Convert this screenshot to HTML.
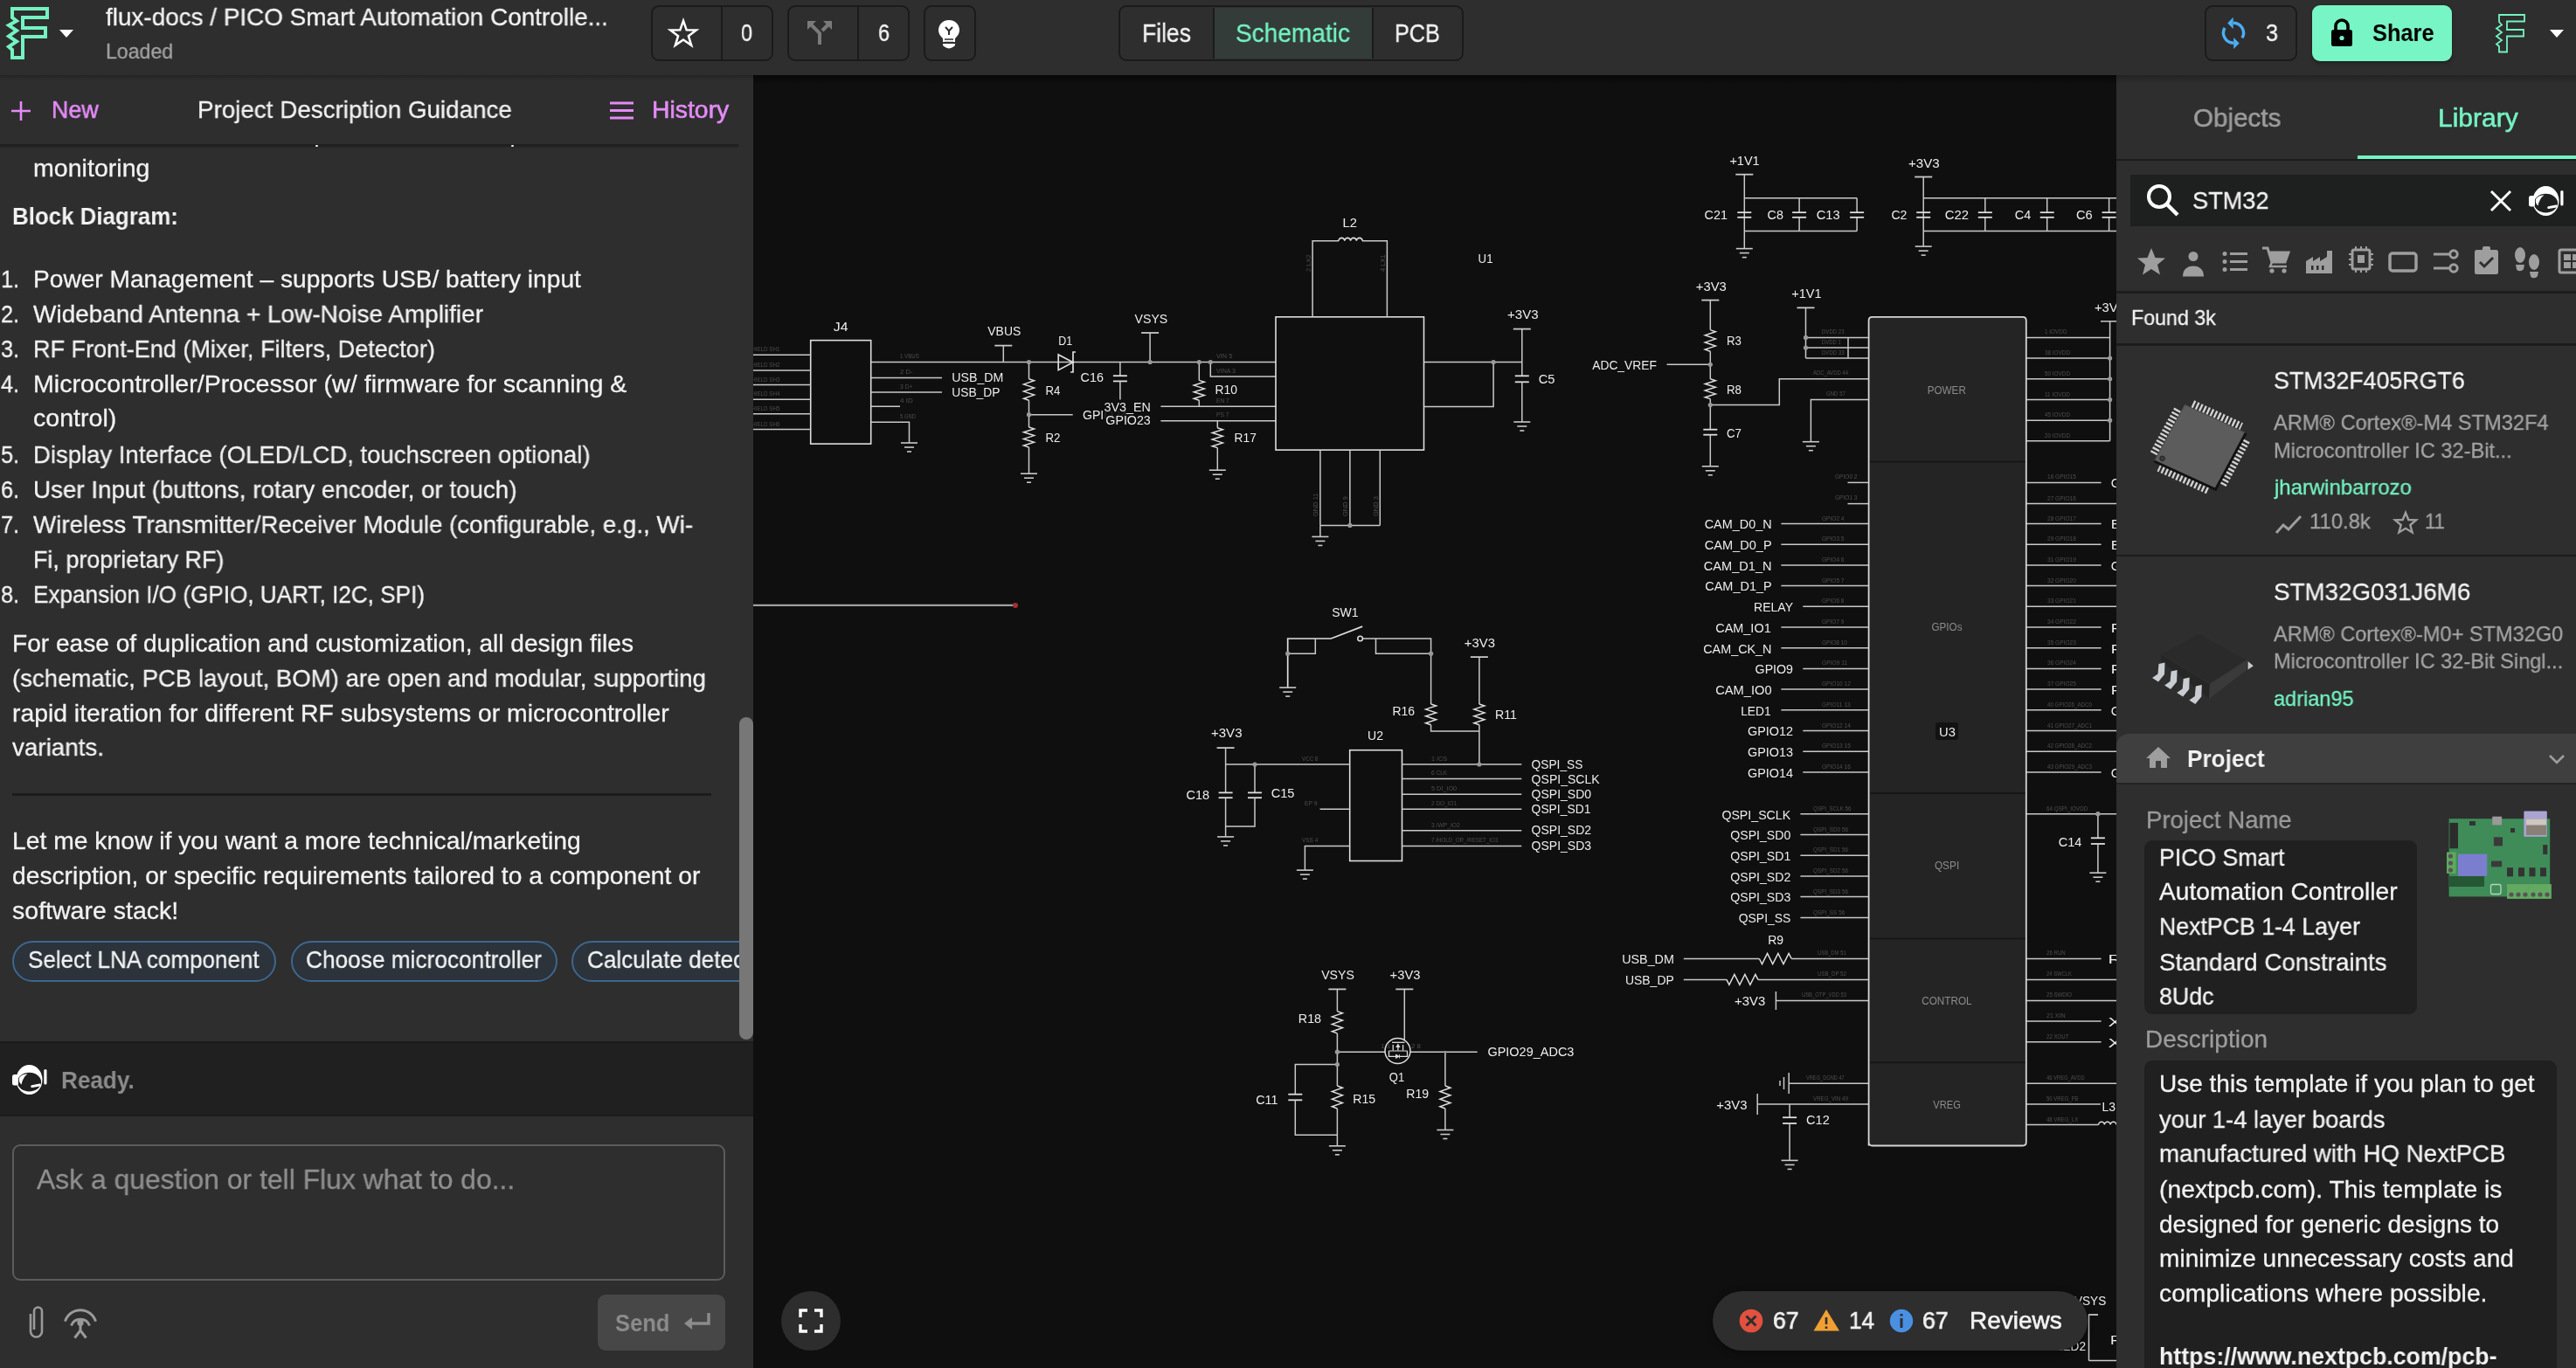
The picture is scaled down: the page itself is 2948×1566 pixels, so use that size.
<!DOCTYPE html><html><head><meta charset="utf-8"><title>Flux</title><style>
html,body{margin:0;padding:0;width:2948px;height:1566px;overflow:hidden;background:#0f0f0f;}
body{position:relative;font-family:"Liberation Sans",sans-serif;}
.b{position:absolute;}
.t{position:absolute;white-space:pre;line-height:1;transform-origin:0 0;will-change:transform;}
svg.b{overflow:visible;}
</style></head><body><div class="b" style="left:862px;top:86px;width:1560px;height:1480px;background:#0f0f0f;overflow:hidden;">
<svg class="b" style="left:-862px;top:-86px;will-change:transform" width="2948" height="1566" viewBox="0 0 2948 1566" font-family="Liberation Sans, sans-serif"><rect x="927.7" y="389.6" width="69.0" height="118.5" rx="0" stroke="#dedede" stroke-width="1.6" fill="none"/><path d="M862.0 406.3 L928.0 406.3" stroke="#c9c9c9" stroke-width="1.5" fill="none"/><path d="M862.0 424.0 L928.0 424.0" stroke="#c9c9c9" stroke-width="1.5" fill="none"/><path d="M862.0 440.6 L928.0 440.6" stroke="#c9c9c9" stroke-width="1.5" fill="none"/><path d="M862.0 457.2 L928.0 457.2" stroke="#c9c9c9" stroke-width="1.5" fill="none"/><path d="M862.0 473.8 L928.0 473.8" stroke="#c9c9c9" stroke-width="1.5" fill="none"/><path d="M862.0 491.6 L928.0 491.6" stroke="#c9c9c9" stroke-width="1.5" fill="none"/><path d="M997.0 414.5 L1460.0 414.5" stroke="#c9c9c9" stroke-width="1.5" fill="none"/><path d="M997.0 432.5 L1078.0 432.5" stroke="#c9c9c9" stroke-width="1.5" fill="none"/><path d="M997.0 448.9 L1078.0 448.9" stroke="#c9c9c9" stroke-width="1.5" fill="none"/><path d="M997.0 465.2 L1030.0 465.2" stroke="#c9c9c9" stroke-width="1.5" fill="none"/><path d="M997.0 483.3 L1040.5 483.3 L1040.5 507.0" stroke="#c9c9c9" stroke-width="1.5" fill="none"/><path d="M1031.0 507.0 L1050.0 507.0" stroke="#c9c9c9" stroke-width="1.6" fill="none"/><path d="M1035.0 512.0 L1046.0 512.0" stroke="#c9c9c9" stroke-width="1.6" fill="none"/><path d="M1038.0 517.0 L1043.0 517.0" stroke="#c9c9c9" stroke-width="1.6" fill="none"/><path d="M1148.3 395.6 L1148.3 414.5" stroke="#c9c9c9" stroke-width="1.5" fill="none"/><path d="M1138.3 395.6 L1158.3 395.6" stroke="#c9c9c9" stroke-width="1.8" fill="none"/><path d="M1177.5 414.5 L1177.5 433.7" stroke="#c9c9c9" stroke-width="1.5" fill="none"/><path d="M1177.5 433.7 L1183.5 435.8 L1171.5 439.9 L1183.5 443.9 L1171.5 448.1 L1183.5 452.1 L1171.5 456.2 L1177.5 458.3" stroke="#dedede" stroke-width="1.5" fill="none"/><path d="M1177.5 458.3 L1177.5 489.0" stroke="#c9c9c9" stroke-width="1.5" fill="none"/><path d="M1177.5 474.7 L1227.7 474.7" stroke="#c9c9c9" stroke-width="1.5" fill="none"/><path d="M1177.5 489.0 L1183.5 490.9 L1171.5 494.8 L1183.5 498.6 L1171.5 502.4 L1183.5 506.2 L1171.5 510.1 L1177.5 512.0" stroke="#dedede" stroke-width="1.5" fill="none"/><path d="M1177.5 512.0 L1177.5 542.2" stroke="#c9c9c9" stroke-width="1.5" fill="none"/><path d="M1168.0 542.2 L1187.0 542.2" stroke="#c9c9c9" stroke-width="1.6" fill="none"/><path d="M1172.0 547.2 L1183.0 547.2" stroke="#c9c9c9" stroke-width="1.6" fill="none"/><path d="M1175.0 552.2 L1180.0 552.2" stroke="#c9c9c9" stroke-width="1.6" fill="none"/><path d="M1211.2 406 L1211.2 423.7 L1228 414.8 Z" stroke="#dedede" stroke-width="1.7" fill="none"/><path d="M1231.0 403.0 L1228.0 403.0 L1228.0 426.0 L1225.0 426.0" stroke="#dedede" stroke-width="1.7" fill="none"/><path d="M1281.9 414.5 L1281.9 430.2" stroke="#c9c9c9" stroke-width="1.5" fill="none"/><path d="M1273.9 430.2 L1289.9 430.2" stroke="#dedede" stroke-width="1.8" fill="none"/><path d="M1273.9 436.4 L1289.9 436.4" stroke="#dedede" stroke-width="1.8" fill="none"/><path d="M1281.9 436.4 L1281.9 457.5" stroke="#c9c9c9" stroke-width="1.5" fill="none"/><path d="M1328.4 465.3 L1460.0 465.3" stroke="#c9c9c9" stroke-width="1.5" fill="none"/><path d="M1328.4 481.8 L1460.0 481.8" stroke="#c9c9c9" stroke-width="1.5" fill="none"/><path d="M1316.1 381.0 L1316.1 414.5" stroke="#c9c9c9" stroke-width="1.5" fill="none"/><path d="M1306.1 381.0 L1326.1 381.0" stroke="#c9c9c9" stroke-width="1.8" fill="none"/><path d="M1372.3 414.5 L1372.3 435.4" stroke="#c9c9c9" stroke-width="1.5" fill="none"/><path d="M1372.3 435.4 L1378.3 437.3 L1366.3 441.1 L1378.3 444.9 L1366.3 448.7 L1378.3 452.5 L1366.3 456.3 L1372.3 458.2" stroke="#dedede" stroke-width="1.5" fill="none"/><path d="M1372.3 458.2 L1372.3 465.3" stroke="#c9c9c9" stroke-width="1.5" fill="none"/><path d="M1385.3 414.5 L1385.3 430.9 L1460.0 430.9" stroke="#c9c9c9" stroke-width="1.5" fill="none"/><path d="M1393.3 481.8 L1393.3 489.8" stroke="#c9c9c9" stroke-width="1.5" fill="none"/><path d="M1393.3 489.8 L1399.3 491.7 L1387.3 495.5 L1399.3 499.3 L1387.3 503.1 L1399.3 506.9 L1387.3 510.7 L1393.3 512.6" stroke="#dedede" stroke-width="1.5" fill="none"/><path d="M1393.3 512.6 L1393.3 538.2" stroke="#c9c9c9" stroke-width="1.5" fill="none"/><path d="M1383.8 538.2 L1402.8 538.2" stroke="#c9c9c9" stroke-width="1.6" fill="none"/><path d="M1387.8 543.2 L1398.8 543.2" stroke="#c9c9c9" stroke-width="1.6" fill="none"/><path d="M1390.8 548.2 L1395.8 548.2" stroke="#c9c9c9" stroke-width="1.6" fill="none"/><rect x="1460.0" y="362.8" width="169.5" height="152.3" rx="0" stroke="#dedede" stroke-width="1.6" fill="none"/><path d="M1502.1 362.8 L1502.1 275.8 L1532.0 275.8" stroke="#c9c9c9" stroke-width="1.5" fill="none"/><path d="M1559.0 275.8 L1587.4 275.8 L1587.4 362.8" stroke="#c9c9c9" stroke-width="1.5" fill="none"/><path d="M1532 275.8 a3.4 3.4 0 0 1 6.8 0 a3.4 3.4 0 0 1 6.8 0 a3.4 3.4 0 0 1 6.8 0 a3.4 3.4 0 0 1 6.8 0" stroke="#dedede" stroke-width="1.6" fill="none"/><path d="M1510.9 515.1 L1510.9 601.4" stroke="#c9c9c9" stroke-width="1.5" fill="none"/><path d="M1544.9 515.1 L1544.9 601.4" stroke="#c9c9c9" stroke-width="1.5" fill="none"/><path d="M1579.3 515.1 L1579.3 601.4" stroke="#c9c9c9" stroke-width="1.5" fill="none"/><path d="M1510.9 601.4 L1579.3 601.4" stroke="#c9c9c9" stroke-width="1.5" fill="none"/><path d="M1510.9 601.4 L1510.9 614.4" stroke="#c9c9c9" stroke-width="1.5" fill="none"/><path d="M1501.4 614.4 L1520.4 614.4" stroke="#c9c9c9" stroke-width="1.6" fill="none"/><path d="M1505.4 619.4 L1516.4 619.4" stroke="#c9c9c9" stroke-width="1.6" fill="none"/><path d="M1508.4 624.4 L1513.4 624.4" stroke="#c9c9c9" stroke-width="1.6" fill="none"/><path d="M1629.5 414.5 L1741.8 414.5" stroke="#c9c9c9" stroke-width="1.5" fill="none"/><path d="M1709.1 414.5 L1709.1 465.4 L1629.5 465.4" stroke="#c9c9c9" stroke-width="1.5" fill="none"/><path d="M1741.8 376.6 L1741.8 430.3" stroke="#c9c9c9" stroke-width="1.5" fill="none"/><path d="M1733.8 430.3 L1749.8 430.3" stroke="#dedede" stroke-width="1.8" fill="none"/><path d="M1733.8 437.3 L1749.8 437.3" stroke="#dedede" stroke-width="1.8" fill="none"/><path d="M1741.8 437.3 L1741.8 483.0" stroke="#c9c9c9" stroke-width="1.5" fill="none"/><path d="M1731.8 376.6 L1751.8 376.6" stroke="#c9c9c9" stroke-width="1.8" fill="none"/><path d="M1732.3 483.0 L1751.3 483.0" stroke="#c9c9c9" stroke-width="1.6" fill="none"/><path d="M1736.3 488.0 L1747.3 488.0" stroke="#c9c9c9" stroke-width="1.6" fill="none"/><path d="M1739.3 493.0 L1744.3 493.0" stroke="#c9c9c9" stroke-width="1.6" fill="none"/><path d="M1907.5 417.3 L1957.3 417.3" stroke="#c9c9c9" stroke-width="1.5" fill="none"/><path d="M1957.3 343.6 L1957.3 377.6" stroke="#c9c9c9" stroke-width="1.5" fill="none"/><path d="M1947.3 343.6 L1967.3 343.6" stroke="#c9c9c9" stroke-width="1.8" fill="none"/><path d="M1957.3 377.6 L1963.3 379.7 L1951.3 383.8 L1963.3 387.9 L1951.3 391.9 L1963.3 396.1 L1951.3 400.1 L1957.3 402.2" stroke="#dedede" stroke-width="1.5" fill="none"/><path d="M1957.3 402.2 L1957.3 433.8" stroke="#c9c9c9" stroke-width="1.5" fill="none"/><path d="M1957.3 433.8 L1963.3 435.7 L1951.3 439.5 L1963.3 443.3 L1951.3 447.1 L1963.3 450.9 L1951.3 454.7 L1957.3 456.6" stroke="#dedede" stroke-width="1.5" fill="none"/><path d="M1957.3 456.6 L1957.3 491.7" stroke="#c9c9c9" stroke-width="1.5" fill="none"/><path d="M1949.3 491.7 L1965.3 491.7" stroke="#dedede" stroke-width="1.8" fill="none"/><path d="M1949.3 497.7 L1965.3 497.7" stroke="#dedede" stroke-width="1.8" fill="none"/><path d="M1957.3 497.7 L1957.3 533.8" stroke="#c9c9c9" stroke-width="1.5" fill="none"/><path d="M1947.8 533.8 L1966.8 533.8" stroke="#c9c9c9" stroke-width="1.6" fill="none"/><path d="M1951.8 538.8 L1962.8 538.8" stroke="#c9c9c9" stroke-width="1.6" fill="none"/><path d="M1954.8 543.8 L1959.8 543.8" stroke="#c9c9c9" stroke-width="1.6" fill="none"/><path d="M1957.3 463.6 L2036.3 463.6 L2036.3 433.8 L2138.4 433.8" stroke="#c9c9c9" stroke-width="1.5" fill="none"/><path d="M2066.5 352.3 L2066.5 410.0" stroke="#c9c9c9" stroke-width="1.5" fill="none"/><path d="M2056.5 352.3 L2076.5 352.3" stroke="#c9c9c9" stroke-width="1.8" fill="none"/><path d="M2066.5 386.4 L2138.4 386.4" stroke="#c9c9c9" stroke-width="1.5" fill="none"/><path d="M2066.5 398.0 L2138.4 398.0" stroke="#c9c9c9" stroke-width="1.5" fill="none"/><path d="M2066.5 410.0 L2138.4 410.0" stroke="#c9c9c9" stroke-width="1.5" fill="none"/><path d="M2115.0 386.4 L2115.0 410.0" stroke="#c9c9c9" stroke-width="1.5" fill="none"/><path d="M2138.4 457.6 L2072.4 457.6 L2072.4 505.7" stroke="#c9c9c9" stroke-width="1.5" fill="none"/><path d="M2062.9 505.7 L2081.9 505.7" stroke="#c9c9c9" stroke-width="1.6" fill="none"/><path d="M2066.9 510.7 L2077.9 510.7" stroke="#c9c9c9" stroke-width="1.6" fill="none"/><path d="M2069.9 515.7 L2074.9 515.7" stroke="#c9c9c9" stroke-width="1.6" fill="none"/><path d="M1996.3 199.7 L1996.3 284.6" stroke="#c9c9c9" stroke-width="1.5" fill="none"/><path d="M1986.3 199.7 L2006.3 199.7" stroke="#c9c9c9" stroke-width="1.8" fill="none"/><path d="M1986.8 284.6 L2005.8 284.6" stroke="#c9c9c9" stroke-width="1.6" fill="none"/><path d="M1990.8 289.6 L2001.8 289.6" stroke="#c9c9c9" stroke-width="1.6" fill="none"/><path d="M1993.8 294.6 L1998.8 294.6" stroke="#c9c9c9" stroke-width="1.6" fill="none"/><path d="M1996.3 226.7 L2125.1 226.7" stroke="#c9c9c9" stroke-width="1.5" fill="none"/><path d="M1996.3 264.6 L2125.1 264.6" stroke="#c9c9c9" stroke-width="1.5" fill="none"/><path d="M1988.3 243.2 L2004.3 243.2" stroke="#dedede" stroke-width="1.8" fill="none"/><path d="M1988.3 248.8 L2004.3 248.8" stroke="#dedede" stroke-width="1.8" fill="none"/><path d="M2059.1 226.7 L2059.1 243.2" stroke="#c9c9c9" stroke-width="1.5" fill="none"/><path d="M2059.1 248.8 L2059.1 264.6" stroke="#c9c9c9" stroke-width="1.5" fill="none"/><path d="M2051.1 243.2 L2067.1 243.2" stroke="#dedede" stroke-width="1.8" fill="none"/><path d="M2051.1 248.8 L2067.1 248.8" stroke="#dedede" stroke-width="1.8" fill="none"/><path d="M2125.1 226.7 L2125.1 243.2" stroke="#c9c9c9" stroke-width="1.5" fill="none"/><path d="M2125.1 248.8 L2125.1 264.6" stroke="#c9c9c9" stroke-width="1.5" fill="none"/><path d="M2117.1 243.2 L2133.1 243.2" stroke="#dedede" stroke-width="1.8" fill="none"/><path d="M2117.1 248.8 L2133.1 248.8" stroke="#dedede" stroke-width="1.8" fill="none"/><path d="M2201.2 202.5 L2201.2 282.1" stroke="#c9c9c9" stroke-width="1.5" fill="none"/><path d="M2191.2 202.5 L2211.2 202.5" stroke="#c9c9c9" stroke-width="1.8" fill="none"/><path d="M2191.7 282.1 L2210.7 282.1" stroke="#c9c9c9" stroke-width="1.6" fill="none"/><path d="M2195.7 287.1 L2206.7 287.1" stroke="#c9c9c9" stroke-width="1.6" fill="none"/><path d="M2198.7 292.1 L2203.7 292.1" stroke="#c9c9c9" stroke-width="1.6" fill="none"/><path d="M2201.2 226.7 L2430.0 226.7" stroke="#c9c9c9" stroke-width="1.5" fill="none"/><path d="M2201.2 264.6 L2430.0 264.6" stroke="#c9c9c9" stroke-width="1.5" fill="none"/><path d="M2193.2 243.2 L2209.2 243.2" stroke="#dedede" stroke-width="1.8" fill="none"/><path d="M2193.2 248.8 L2209.2 248.8" stroke="#dedede" stroke-width="1.8" fill="none"/><path d="M2271.8 226.7 L2271.8 243.2" stroke="#c9c9c9" stroke-width="1.5" fill="none"/><path d="M2271.8 248.8 L2271.8 264.6" stroke="#c9c9c9" stroke-width="1.5" fill="none"/><path d="M2263.8 243.2 L2279.8 243.2" stroke="#dedede" stroke-width="1.8" fill="none"/><path d="M2263.8 248.8 L2279.8 248.8" stroke="#dedede" stroke-width="1.8" fill="none"/><path d="M2342.7 226.7 L2342.7 243.2" stroke="#c9c9c9" stroke-width="1.5" fill="none"/><path d="M2342.7 248.8 L2342.7 264.6" stroke="#c9c9c9" stroke-width="1.5" fill="none"/><path d="M2334.7 243.2 L2350.7 243.2" stroke="#dedede" stroke-width="1.8" fill="none"/><path d="M2334.7 248.8 L2350.7 248.8" stroke="#dedede" stroke-width="1.8" fill="none"/><path d="M2413.6 226.7 L2413.6 243.2" stroke="#c9c9c9" stroke-width="1.5" fill="none"/><path d="M2413.6 248.8 L2413.6 264.6" stroke="#c9c9c9" stroke-width="1.5" fill="none"/><path d="M2405.6 243.2 L2421.6 243.2" stroke="#dedede" stroke-width="1.8" fill="none"/><path d="M2405.6 248.8 L2421.6 248.8" stroke="#dedede" stroke-width="1.8" fill="none"/><path d="M2318.8 386.4 L2414.6 386.4" stroke="#c9c9c9" stroke-width="1.5" fill="none"/><path d="M2318.8 410.0 L2414.6 410.0" stroke="#c9c9c9" stroke-width="1.5" fill="none"/><path d="M2318.8 433.8 L2414.6 433.8" stroke="#c9c9c9" stroke-width="1.5" fill="none"/><path d="M2318.8 457.6 L2414.6 457.6" stroke="#c9c9c9" stroke-width="1.5" fill="none"/><path d="M2318.8 481.2 L2414.6 481.2" stroke="#c9c9c9" stroke-width="1.5" fill="none"/><path d="M2318.8 504.7 L2414.6 504.7" stroke="#c9c9c9" stroke-width="1.5" fill="none"/><path d="M2414.6 367.8 L2414.6 504.7" stroke="#c9c9c9" stroke-width="1.5" fill="none"/><path d="M2404.0 367.8 L2430.0 367.8" stroke="#c9c9c9" stroke-width="1.5" fill="none"/><path d="M2114.5 552.4 L2138.0 552.4" stroke="#c9c9c9" stroke-width="1.5" fill="none"/><path d="M2114.5 576.6 L2138.0 576.6" stroke="#c9c9c9" stroke-width="1.5" fill="none"/><path d="M2038.4 599.5 L2138.0 599.5" stroke="#c9c9c9" stroke-width="1.5" fill="none"/><path d="M2038.4 623.2 L2138.0 623.2" stroke="#c9c9c9" stroke-width="1.5" fill="none"/><path d="M2038.4 646.9 L2138.0 646.9" stroke="#c9c9c9" stroke-width="1.5" fill="none"/><path d="M2038.4 670.6 L2138.0 670.6" stroke="#c9c9c9" stroke-width="1.5" fill="none"/><path d="M2063.3 694.3 L2138.0 694.3" stroke="#c9c9c9" stroke-width="1.5" fill="none"/><path d="M2038.4 718.0 L2138.0 718.0" stroke="#c9c9c9" stroke-width="1.5" fill="none"/><path d="M2038.4 741.7 L2138.0 741.7" stroke="#c9c9c9" stroke-width="1.5" fill="none"/><path d="M2063.3 765.4 L2138.0 765.4" stroke="#c9c9c9" stroke-width="1.5" fill="none"/><path d="M2038.4 789.1 L2138.0 789.1" stroke="#c9c9c9" stroke-width="1.5" fill="none"/><path d="M2038.4 812.8 L2138.0 812.8" stroke="#c9c9c9" stroke-width="1.5" fill="none"/><path d="M2063.3 836.5 L2138.0 836.5" stroke="#c9c9c9" stroke-width="1.5" fill="none"/><path d="M2063.3 860.2 L2138.0 860.2" stroke="#c9c9c9" stroke-width="1.5" fill="none"/><path d="M2063.3 883.9 L2138.0 883.9" stroke="#c9c9c9" stroke-width="1.5" fill="none"/><path d="M2318.8 552.4 L2404.6 552.4" stroke="#c9c9c9" stroke-width="1.5" fill="none"/><path d="M2318.8 576.6 L2430.0 576.6" stroke="#c9c9c9" stroke-width="1.5" fill="none"/><path d="M2318.8 599.5 L2404.6 599.5" stroke="#c9c9c9" stroke-width="1.5" fill="none"/><path d="M2318.8 623.2 L2404.6 623.2" stroke="#c9c9c9" stroke-width="1.5" fill="none"/><path d="M2318.8 646.9 L2404.6 646.9" stroke="#c9c9c9" stroke-width="1.5" fill="none"/><path d="M2318.8 670.6 L2430.0 670.6" stroke="#c9c9c9" stroke-width="1.5" fill="none"/><path d="M2318.8 694.3 L2430.0 694.3" stroke="#c9c9c9" stroke-width="1.5" fill="none"/><path d="M2318.8 718.0 L2404.6 718.0" stroke="#c9c9c9" stroke-width="1.5" fill="none"/><path d="M2318.8 741.7 L2404.6 741.7" stroke="#c9c9c9" stroke-width="1.5" fill="none"/><path d="M2318.8 765.4 L2404.6 765.4" stroke="#c9c9c9" stroke-width="1.5" fill="none"/><path d="M2318.8 789.1 L2404.6 789.1" stroke="#c9c9c9" stroke-width="1.5" fill="none"/><path d="M2318.8 812.8 L2404.6 812.8" stroke="#c9c9c9" stroke-width="1.5" fill="none"/><path d="M2318.8 836.5 L2430.0 836.5" stroke="#c9c9c9" stroke-width="1.5" fill="none"/><path d="M2318.8 860.2 L2430.0 860.2" stroke="#c9c9c9" stroke-width="1.5" fill="none"/><path d="M2318.8 883.9 L2404.6 883.9" stroke="#c9c9c9" stroke-width="1.5" fill="none"/><path d="M2060.4 931.7 L2138.7 931.7" stroke="#c9c9c9" stroke-width="1.5" fill="none"/><path d="M2060.4 955.6 L2138.7 955.6" stroke="#c9c9c9" stroke-width="1.5" fill="none"/><path d="M2060.4 979.3 L2138.7 979.3" stroke="#c9c9c9" stroke-width="1.5" fill="none"/><path d="M2060.4 1002.9 L2138.7 1002.9" stroke="#c9c9c9" stroke-width="1.5" fill="none"/><path d="M2060.4 1026.5 L2138.7 1026.5" stroke="#c9c9c9" stroke-width="1.5" fill="none"/><path d="M2060.4 1050.5 L2138.7 1050.5" stroke="#c9c9c9" stroke-width="1.5" fill="none"/><path d="M1926.8 1097.5 L2013.4 1097.5" stroke="#c9c9c9" stroke-width="1.5" fill="none"/><path d="M2013.4 1097.5 L2016.5 1103.5 L2022.6 1091.5 L2028.7 1103.5 L2034.9 1091.5 L2041.0 1103.5 L2047.1 1091.5 L2050.2 1097.5" stroke="#dedede" stroke-width="1.5" fill="none"/><path d="M2050.2 1097.5 L2138.7 1097.5" stroke="#c9c9c9" stroke-width="1.5" fill="none"/><path d="M1926.8 1121.4 L1975.9 1121.4" stroke="#c9c9c9" stroke-width="1.5" fill="none"/><path d="M1975.9 1121.4 L1978.9 1127.4 L1984.9 1115.4 L1990.9 1127.4 L1996.9 1115.4 L2002.9 1127.4 L2008.9 1115.4 L2011.9 1121.4" stroke="#dedede" stroke-width="1.5" fill="none"/><path d="M2011.9 1121.4 L2138.7 1121.4" stroke="#c9c9c9" stroke-width="1.5" fill="none"/><path d="M2032.4 1135.0 L2032.4 1156.0" stroke="#c9c9c9" stroke-width="1.5" fill="none"/><path d="M2032.4 1145.4 L2138.7 1145.4" stroke="#c9c9c9" stroke-width="1.5" fill="none"/><path d="M2047.2 1240.2 L2138.7 1240.2" stroke="#c9c9c9" stroke-width="1.5" fill="none"/><path d="M2047.2 1228.0 L2047.2 1252.0" stroke="#c9c9c9" stroke-width="1.5" fill="none"/><path d="M2041.5 1233.0 L2041.5 1247.0" stroke="#c9c9c9" stroke-width="1.5" fill="none"/><path d="M2037.0 1237.0 L2037.0 1243.0" stroke="#c9c9c9" stroke-width="1.5" fill="none"/><path d="M2011.2 1252.0 L2011.2 1276.0" stroke="#c9c9c9" stroke-width="1.5" fill="none"/><path d="M2011.2 1263.9 L2138.7 1263.9" stroke="#c9c9c9" stroke-width="1.5" fill="none"/><path d="M2048.1 1263.9 L2048.1 1279.2" stroke="#c9c9c9" stroke-width="1.5" fill="none"/><path d="M2040.1 1279.2 L2056.1 1279.2" stroke="#dedede" stroke-width="1.8" fill="none"/><path d="M2040.1 1286.0 L2056.1 1286.0" stroke="#dedede" stroke-width="1.8" fill="none"/><path d="M2048.1 1286.0 L2048.1 1328.4" stroke="#c9c9c9" stroke-width="1.5" fill="none"/><path d="M2038.6 1328.4 L2057.6 1328.4" stroke="#c9c9c9" stroke-width="1.6" fill="none"/><path d="M2042.6 1333.4 L2053.6 1333.4" stroke="#c9c9c9" stroke-width="1.6" fill="none"/><path d="M2045.6 1338.4 L2050.6 1338.4" stroke="#c9c9c9" stroke-width="1.6" fill="none"/><path d="M2318.8 931.7 L2430.0 931.7" stroke="#c9c9c9" stroke-width="1.5" fill="none"/><path d="M2318.8 1097.5 L2404.6 1097.5" stroke="#c9c9c9" stroke-width="1.5" fill="none"/><path d="M2318.8 1121.4 L2430.0 1121.4" stroke="#c9c9c9" stroke-width="1.5" fill="none"/><path d="M2318.8 1145.4 L2430.0 1145.4" stroke="#c9c9c9" stroke-width="1.5" fill="none"/><path d="M2318.8 1169.0 L2404.6 1169.0" stroke="#c9c9c9" stroke-width="1.5" fill="none"/><path d="M2318.8 1192.7 L2404.6 1192.7" stroke="#c9c9c9" stroke-width="1.5" fill="none"/><path d="M2318.8 1240.2 L2430.0 1240.2" stroke="#c9c9c9" stroke-width="1.5" fill="none"/><path d="M2318.8 1263.9 L2403.9 1263.9" stroke="#c9c9c9" stroke-width="1.5" fill="none"/><path d="M2318.8 1287.6 L2401.6 1287.6" stroke="#c9c9c9" stroke-width="1.5" fill="none"/><path d="M2401.6 1287.6 a3.4 3.4 0 0 1 6.8 0 a3.4 3.4 0 0 1 6.8 0 a3.4 3.4 0 0 1 6.8 0" stroke="#dedede" stroke-width="1.5" fill="none"/><path d="M2400.9 931.7 L2400.9 959.3" stroke="#c9c9c9" stroke-width="1.5" fill="none"/><path d="M2392.9 959.3 L2408.9 959.3" stroke="#dedede" stroke-width="1.8" fill="none"/><path d="M2392.9 966.0 L2408.9 966.0" stroke="#dedede" stroke-width="1.8" fill="none"/><path d="M2400.9 966.0 L2400.9 999.2" stroke="#c9c9c9" stroke-width="1.5" fill="none"/><path d="M2391.4 999.2 L2410.4 999.2" stroke="#c9c9c9" stroke-width="1.6" fill="none"/><path d="M2395.4 1004.2 L2406.4 1004.2" stroke="#c9c9c9" stroke-width="1.6" fill="none"/><path d="M2398.4 1009.2 L2403.4 1009.2" stroke="#c9c9c9" stroke-width="1.6" fill="none"/><path d="M1473.7 787.1 L1473.7 731.0 L1505.3 731.0 L1523.2 731.0 L1559.2 717.1" stroke="#dedede" stroke-width="1.7" fill="none"/><path d="M1473.7 748.2 L1505.3 748.2 L1505.3 731.0" stroke="#c9c9c9" stroke-width="1.5" fill="none"/><path d="M1464.2 787.1 L1483.2 787.1" stroke="#c9c9c9" stroke-width="1.6" fill="none"/><path d="M1468.2 792.1 L1479.2 792.1" stroke="#c9c9c9" stroke-width="1.6" fill="none"/><path d="M1471.2 797.1 L1476.2 797.1" stroke="#c9c9c9" stroke-width="1.6" fill="none"/><path d="M1559.4 731.0 L1637.6 731.0 L1637.6 806.0" stroke="#c9c9c9" stroke-width="1.5" fill="none"/><path d="M1574.5 731.0 L1574.5 748.2 L1637.6 748.2" stroke="#c9c9c9" stroke-width="1.5" fill="none"/><path d="M1637.6 806.0 L1643.6 808.0 L1631.6 811.9 L1643.6 815.9 L1631.6 819.8 L1643.6 823.8 L1631.6 827.7 L1637.6 829.7" stroke="#dedede" stroke-width="1.5" fill="none"/><path d="M1637.6 829.7 L1637.6 837.1 L1692.9 837.1" stroke="#c9c9c9" stroke-width="1.5" fill="none"/><path d="M1692.9 752.1 L1692.9 806.0" stroke="#c9c9c9" stroke-width="1.5" fill="none"/><path d="M1682.9 752.1 L1702.9 752.1" stroke="#c9c9c9" stroke-width="1.8" fill="none"/><path d="M1692.9 806.0 L1698.9 808.0 L1686.9 811.9 L1698.9 815.9 L1686.9 819.8 L1698.9 823.8 L1686.9 827.7 L1692.9 829.7" stroke="#dedede" stroke-width="1.5" fill="none"/><path d="M1692.9 829.7 L1692.9 875.0" stroke="#c9c9c9" stroke-width="1.5" fill="none"/><rect x="1544.7" y="858.7" width="59.8" height="126.8" rx="0" stroke="#dedede" stroke-width="1.6" fill="none"/><path d="M1604.5 875.0 L1741.3 875.0" stroke="#c9c9c9" stroke-width="1.5" fill="none"/><path d="M1604.5 891.6 L1741.3 891.6" stroke="#c9c9c9" stroke-width="1.5" fill="none"/><path d="M1604.5 909.2 L1741.3 909.2" stroke="#c9c9c9" stroke-width="1.5" fill="none"/><path d="M1604.5 926.3 L1741.3 926.3" stroke="#c9c9c9" stroke-width="1.5" fill="none"/><path d="M1604.5 950.8 L1741.3 950.8" stroke="#c9c9c9" stroke-width="1.5" fill="none"/><path d="M1604.5 968.4 L1741.3 968.4" stroke="#c9c9c9" stroke-width="1.5" fill="none"/><path d="M1402.6 875.0 L1544.7 875.0" stroke="#c9c9c9" stroke-width="1.5" fill="none"/><path d="M1510.5 926.3 L1544.7 926.3" stroke="#c9c9c9" stroke-width="1.5" fill="none"/><path d="M1544.7 968.4 L1493.4 968.4 L1493.4 996.1" stroke="#c9c9c9" stroke-width="1.5" fill="none"/><path d="M1483.9 996.1 L1502.9 996.1" stroke="#c9c9c9" stroke-width="1.6" fill="none"/><path d="M1487.9 1001.1 L1498.9 1001.1" stroke="#c9c9c9" stroke-width="1.6" fill="none"/><path d="M1490.9 1006.1 L1495.9 1006.1" stroke="#c9c9c9" stroke-width="1.6" fill="none"/><path d="M1402.6 856.1 L1402.6 907.4" stroke="#c9c9c9" stroke-width="1.5" fill="none"/><path d="M1392.6 856.1 L1412.6 856.1" stroke="#c9c9c9" stroke-width="1.8" fill="none"/><path d="M1394.6 907.4 L1410.6 907.4" stroke="#dedede" stroke-width="1.8" fill="none"/><path d="M1394.6 913.2 L1410.6 913.2" stroke="#dedede" stroke-width="1.8" fill="none"/><path d="M1402.6 913.2 L1402.6 957.9" stroke="#c9c9c9" stroke-width="1.5" fill="none"/><path d="M1393.1 957.9 L1412.1 957.9" stroke="#c9c9c9" stroke-width="1.6" fill="none"/><path d="M1397.1 962.9 L1408.1 962.9" stroke="#c9c9c9" stroke-width="1.6" fill="none"/><path d="M1400.1 967.9 L1405.1 967.9" stroke="#c9c9c9" stroke-width="1.6" fill="none"/><path d="M1436.0 875.0 L1436.0 907.4" stroke="#c9c9c9" stroke-width="1.5" fill="none"/><path d="M1428.0 907.4 L1444.0 907.4" stroke="#dedede" stroke-width="1.8" fill="none"/><path d="M1428.0 913.2 L1444.0 913.2" stroke="#dedede" stroke-width="1.8" fill="none"/><path d="M1436.0 913.2 L1436.0 946.1 L1402.6 946.1" stroke="#c9c9c9" stroke-width="1.5" fill="none"/><path d="M1530.4 1132.4 L1530.4 1157.6" stroke="#c9c9c9" stroke-width="1.5" fill="none"/><path d="M1520.4 1132.4 L1540.4 1132.4" stroke="#c9c9c9" stroke-width="1.8" fill="none"/><path d="M1530.4 1157.6 L1536.4 1159.7 L1524.4 1163.9 L1536.4 1168.1 L1524.4 1172.4 L1536.4 1176.6 L1524.4 1180.8 L1530.4 1182.9" stroke="#dedede" stroke-width="1.5" fill="none"/><path d="M1530.4 1182.9 L1530.4 1243.0" stroke="#c9c9c9" stroke-width="1.5" fill="none"/><path d="M1530.4 1204.2 L1585.0 1204.2" stroke="#c9c9c9" stroke-width="1.5" fill="none"/><path d="M1614.0 1204.2 L1690.7 1204.2" stroke="#c9c9c9" stroke-width="1.5" fill="none"/><path d="M1530.4 1218.6 L1482.3 1218.6 L1482.3 1252.7" stroke="#c9c9c9" stroke-width="1.5" fill="none"/><path d="M1474.3 1252.7 L1490.3 1252.7" stroke="#dedede" stroke-width="1.8" fill="none"/><path d="M1474.3 1259.3 L1490.3 1259.3" stroke="#dedede" stroke-width="1.8" fill="none"/><path d="M1482.3 1259.3 L1482.3 1299.3 L1530.4 1299.3" stroke="#c9c9c9" stroke-width="1.5" fill="none"/><path d="M1530.4 1243.0 L1536.4 1245.2 L1524.4 1249.5 L1536.4 1253.8 L1524.4 1258.2 L1536.4 1262.5 L1524.4 1266.8 L1530.4 1269.0" stroke="#dedede" stroke-width="1.5" fill="none"/><path d="M1530.4 1269.0 L1530.4 1311.8" stroke="#c9c9c9" stroke-width="1.5" fill="none"/><path d="M1520.9 1311.8 L1539.9 1311.8" stroke="#c9c9c9" stroke-width="1.6" fill="none"/><path d="M1524.9 1316.8 L1535.9 1316.8" stroke="#c9c9c9" stroke-width="1.6" fill="none"/><path d="M1527.9 1321.8 L1532.9 1321.8" stroke="#c9c9c9" stroke-width="1.6" fill="none"/><path d="M1607.3 1132.4 L1607.3 1190.6" stroke="#c9c9c9" stroke-width="1.5" fill="none"/><path d="M1597.3 1132.4 L1617.3 1132.4" stroke="#c9c9c9" stroke-width="1.8" fill="none"/><path d="M1593.0 1193.3 L1607.5 1193.3" stroke="#dedede" stroke-width="1.3" fill="none"/><path d="M1594.2 1196.0 L1594.2 1202.5" stroke="#dedede" stroke-width="1.3" fill="none"/><path d="M1599.9 1196.0 L1599.9 1202.5" stroke="#dedede" stroke-width="1.3" fill="none"/><path d="M1605.6 1196.0 L1605.6 1202.5" stroke="#dedede" stroke-width="1.3" fill="none"/><path d="M1589.5 1203.0 L1589.5 1209.3 L1610.5 1209.3 L1610.5 1203.0" stroke="#dedede" stroke-width="1.3" fill="none"/><path d="M1589.5 1203.0 L1610.5 1203.0" stroke="#dedede" stroke-width="1.0" fill="none"/><path d="M1653.9 1204.2 L1653.9 1243.0" stroke="#c9c9c9" stroke-width="1.5" fill="none"/><path d="M1653.9 1243.0 L1659.9 1245.2 L1647.9 1249.5 L1659.9 1253.8 L1647.9 1258.2 L1659.9 1262.5 L1647.9 1266.8 L1653.9 1269.0" stroke="#dedede" stroke-width="1.5" fill="none"/><path d="M1653.9 1269.0 L1653.9 1293.5" stroke="#c9c9c9" stroke-width="1.5" fill="none"/><path d="M1644.4 1293.5 L1663.4 1293.5" stroke="#c9c9c9" stroke-width="1.6" fill="none"/><path d="M1648.4 1298.5 L1659.4 1298.5" stroke="#c9c9c9" stroke-width="1.6" fill="none"/><path d="M1651.4 1303.5 L1656.4 1303.5" stroke="#c9c9c9" stroke-width="1.6" fill="none"/><path d="M2390.0 1505.0 L2401.0 1505.0" stroke="#c9c9c9" stroke-width="1.8" fill="none"/><path d="M2390.5 1505.0 L2390.5 1557.5" stroke="#c9c9c9" stroke-width="1.5" fill="none"/><path d="M2390.5 1557.5 L2430.0 1557.5" stroke="#c9c9c9" stroke-width="1.5" fill="none"/><path d="M862.0 692.9 L1160.0 692.9" stroke="#a0a0a0" stroke-width="2.2" fill="none"/><circle cx="1177.5" cy="414.5" r="2.6" fill="#9a9a9a"/><circle cx="1177.5" cy="474.7" r="2.6" fill="#9a9a9a"/><circle cx="1316.1" cy="414.5" r="2.6" fill="#9a9a9a"/><circle cx="1372.3" cy="414.5" r="2.6" fill="#9a9a9a"/><circle cx="1385.3" cy="414.5" r="2.6" fill="#9a9a9a"/><circle cx="1544.9" cy="601.4" r="2.6" fill="#9a9a9a"/><circle cx="1709.1" cy="414.5" r="2.6" fill="#9a9a9a"/><circle cx="1957.3" cy="417.3" r="2.6" fill="#9a9a9a"/><circle cx="1957.3" cy="463.6" r="2.6" fill="#9a9a9a"/><circle cx="2066.5" cy="386.4" r="2.6" fill="#9a9a9a"/><circle cx="2066.5" cy="398.0" r="2.6" fill="#9a9a9a"/><path d="M2138.6 1311.5 L2138.6 367 Q2138.6 362.9 2142.6 362.9 L2314.8 362.9 Q2318.8 362.9 2318.8 367 L2318.8 1307.5 Q2318.8 1311.5 2314.8 1311.5 L2142.6 1311.5 Q2138.6 1311.5 2138.6 1307.5 Z" fill="#242424" stroke="#d6d6d6" stroke-width="1.8"/><path d="M2140 528.6 L2317.5 528.6" stroke="#161616" stroke-width="2"/><path d="M2140 908 L2317.5 908" stroke="#161616" stroke-width="2"/><path d="M2140 1074.4 L2317.5 1074.4" stroke="#161616" stroke-width="2"/><path d="M2140 1216.3 L2317.5 1216.3" stroke="#161616" stroke-width="2"/><rect x="2215" y="827" width="26" height="20" rx="3" fill="#121212"/><circle cx="2414.6" cy="410.0" r="2.6" fill="#9a9a9a"/><circle cx="2414.6" cy="433.8" r="2.6" fill="#9a9a9a"/><circle cx="2414.6" cy="457.6" r="2.6" fill="#9a9a9a"/><circle cx="2414.6" cy="481.2" r="2.6" fill="#9a9a9a"/><circle cx="2400.9" cy="931.7" r="2.6" fill="#9a9a9a"/><circle cx="1473.7" cy="748.2" r="2.6" fill="#9a9a9a"/><circle cx="1556.6" cy="731" r="2.8" fill="none" stroke="#dedede" stroke-width="1.5"/><circle cx="1637.6" cy="748.2" r="2.6" fill="#9a9a9a"/><circle cx="1692.9" cy="875.0" r="2.6" fill="#9a9a9a"/><circle cx="1436.0" cy="875.0" r="2.6" fill="#9a9a9a"/><circle cx="1530.4" cy="1204.2" r="2.6" fill="#9a9a9a"/><circle cx="1530.4" cy="1218.6" r="2.6" fill="#9a9a9a"/><circle cx="1599.5" cy="1203" r="14.5" fill="none" stroke="#dedede" stroke-width="1.5"/><path d="M1599.9 1194.5 L1602.6 1199 L1597.2 1199 Z" fill="#dedede"/><path d="M1597.5 1207 L1601 1209.3 L1597.5 1211.6 Z M1601.5 1207 L1601.5 1211.6" fill="#dedede" stroke="#dedede" stroke-width="0.8"/><circle cx="1653.9" cy="1204.2" r="1.5" fill="#9a9a9a"/><circle cx="1162" cy="692.9" r="3" fill="#a33030"/><text x="953.8" y="378.9" font-size="15.5" fill="#ececec" textLength="16.7" lengthAdjust="spacingAndGlyphs">J4</text><text x="856.0" y="402.3" font-size="7" fill="#4e4e4e" textLength="36.5" lengthAdjust="spacingAndGlyphs">SHIELD SH1</text><text x="856.0" y="420.0" font-size="7" fill="#4e4e4e" textLength="36.5" lengthAdjust="spacingAndGlyphs">SHIELD SH2</text><text x="856.0" y="436.6" font-size="7" fill="#4e4e4e" textLength="36.5" lengthAdjust="spacingAndGlyphs">SHIELD SH3</text><text x="856.0" y="453.2" font-size="7" fill="#4e4e4e" textLength="36.5" lengthAdjust="spacingAndGlyphs">SHIELD SH4</text><text x="856.0" y="469.8" font-size="7" fill="#4e4e4e" textLength="36.5" lengthAdjust="spacingAndGlyphs">SHIELD SH5</text><text x="856.0" y="487.6" font-size="7" fill="#4e4e4e" textLength="36.5" lengthAdjust="spacingAndGlyphs">SHIELD SH6</text><text x="1030.0" y="410.0" font-size="7" fill="#4e4e4e" textLength="21.8" lengthAdjust="spacingAndGlyphs">1 VBUS</text><text x="1030.0" y="428.0" font-size="7" fill="#4e4e4e" textLength="14.5" lengthAdjust="spacingAndGlyphs">2 D-</text><text x="1030.0" y="445.0" font-size="7" fill="#4e4e4e" textLength="14.5" lengthAdjust="spacingAndGlyphs">3 D+</text><text x="1030.0" y="461.0" font-size="7" fill="#4e4e4e" textLength="14.7" lengthAdjust="spacingAndGlyphs">4 ID</text><text x="1030.0" y="479.0" font-size="7" fill="#4e4e4e" textLength="18.1" lengthAdjust="spacingAndGlyphs">5 GND</text><text x="1089.2" y="437.2" font-size="15.5" fill="#ececec" textLength="59.2" lengthAdjust="spacingAndGlyphs">USB_DM</text><text x="1089.2" y="453.6" font-size="15.5" fill="#ececec" textLength="55.3" lengthAdjust="spacingAndGlyphs">USB_DP</text><text x="1130.3" y="384.0" font-size="15.5" fill="#ececec" textLength="38.0" lengthAdjust="spacingAndGlyphs">VBUS</text><text x="1196.4" y="451.7" font-size="15.5" fill="#ececec" textLength="16.9" lengthAdjust="spacingAndGlyphs">R4</text><text x="1196.4" y="505.9" font-size="15.5" fill="#ececec" textLength="16.9" lengthAdjust="spacingAndGlyphs">R2</text><text x="1211.2" y="394.8" font-size="15.5" fill="#ececec" textLength="15.9" lengthAdjust="spacingAndGlyphs">D1</text><text x="1236.6" y="436.8" font-size="15.5" fill="#ececec" textLength="26.3" lengthAdjust="spacingAndGlyphs">C16</text><text x="1238.9" y="480.0" font-size="15.5" fill="#ececec" textLength="51.1" lengthAdjust="spacingAndGlyphs">GPIO24</text><rect x="1262" y="458" width="56" height="32" fill="#0f0f0f" opacity="0.9"/><text x="1263.5" y="470.5" font-size="15.5" fill="#ececec" textLength="53.3" lengthAdjust="spacingAndGlyphs">3V3_EN</text><text x="1265.3" y="486.3" font-size="15.5" fill="#ececec" textLength="51.5" lengthAdjust="spacingAndGlyphs">GPIO23</text><text x="1298.6" y="369.8" font-size="15.5" fill="#ececec" textLength="37.6" lengthAdjust="spacingAndGlyphs">VSYS</text><text x="1390.5" y="451.2" font-size="15.5" fill="#ececec" textLength="25.4" lengthAdjust="spacingAndGlyphs">R10</text><text x="1392.0" y="410.0" font-size="7" fill="#4e4e4e" textLength="18.2" lengthAdjust="spacingAndGlyphs">VIN 5</text><text x="1392.0" y="427.0" font-size="7" fill="#4e4e4e" textLength="21.9" lengthAdjust="spacingAndGlyphs">VINA 3</text><text x="1392.0" y="461.0" font-size="7" fill="#4e4e4e" textLength="14.6" lengthAdjust="spacingAndGlyphs">EN 7</text><text x="1392.0" y="477.0" font-size="7" fill="#4e4e4e" textLength="14.5" lengthAdjust="spacingAndGlyphs">PS 7</text><text x="1412.6" y="505.6" font-size="15.5" fill="#ececec" textLength="25.2" lengthAdjust="spacingAndGlyphs">R17</text><text x="1536.5" y="260.0" font-size="15.5" fill="#ececec" textLength="16.5" lengthAdjust="spacingAndGlyphs">L2</text><text transform="translate(1499.5 311) rotate(-90)" font-size="7.5" fill="#4e4e4e">2 LX2</text><text transform="translate(1584.6 311) rotate(-90)" font-size="7.5" fill="#4e4e4e">4 LX1</text><text transform="translate(1507.5 591) rotate(-90)" font-size="7.5" fill="#4e4e4e">GND 11</text><text transform="translate(1542 591) rotate(-90)" font-size="7.5" fill="#4e4e4e">GND 9</text><text transform="translate(1576.5 591) rotate(-90)" font-size="7.5" fill="#4e4e4e">GND 3</text><text x="1691.6" y="301.1" font-size="15.5" fill="#ececec" textLength="16.9" lengthAdjust="spacingAndGlyphs">U1</text><text x="1725.0" y="365.3" font-size="15.5" fill="#ececec" textLength="35.6" lengthAdjust="spacingAndGlyphs">+3V3</text><text x="1760.7" y="439.0" font-size="15.5" fill="#ececec" textLength="18.7" lengthAdjust="spacingAndGlyphs">C5</text><text x="1822.2" y="423.3" font-size="15.5" fill="#ececec" textLength="73.7" lengthAdjust="spacingAndGlyphs">ADC_VREF</text><text x="1940.8" y="333.0" font-size="15.5" fill="#ececec" textLength="35.0" lengthAdjust="spacingAndGlyphs">+3V3</text><text x="1975.9" y="395.2" font-size="15.5" fill="#ececec" textLength="16.9" lengthAdjust="spacingAndGlyphs">R3</text><text x="1975.9" y="450.6" font-size="15.5" fill="#ececec" textLength="16.9" lengthAdjust="spacingAndGlyphs">R8</text><text x="1975.9" y="500.5" font-size="15.5" fill="#ececec" textLength="16.9" lengthAdjust="spacingAndGlyphs">C7</text><text x="2050.3" y="340.8" font-size="15.5" fill="#ececec" textLength="34.3" lengthAdjust="spacingAndGlyphs">+1V1</text><text x="2085.0" y="382.0" font-size="7" fill="#4e4e4e" textLength="25.5" lengthAdjust="spacingAndGlyphs">DVDD 23</text><text x="2085.0" y="394.0" font-size="7" fill="#4e4e4e" textLength="21.8" lengthAdjust="spacingAndGlyphs">DVDD 1</text><text x="2085.0" y="406.0" font-size="7" fill="#4e4e4e" textLength="25.5" lengthAdjust="spacingAndGlyphs">DVDD 33</text><text x="2075.0" y="429.0" font-size="7" fill="#4e4e4e" textLength="40.1" lengthAdjust="spacingAndGlyphs">ADC_AVDD 44</text><text x="2090.0" y="453.0" font-size="7" fill="#4e4e4e" textLength="21.9" lengthAdjust="spacingAndGlyphs">GND 57</text><text x="1979.4" y="188.8" font-size="15.5" fill="#ececec" textLength="34.3" lengthAdjust="spacingAndGlyphs">+1V1</text><text x="1950.6" y="250.6" font-size="15.5" fill="#ececec" textLength="26.3" lengthAdjust="spacingAndGlyphs">C21</text><text x="2022.6" y="250.6" font-size="15.5" fill="#ececec" textLength="18.3" lengthAdjust="spacingAndGlyphs">C8</text><text x="2078.7" y="250.6" font-size="15.5" fill="#ececec" textLength="27.0" lengthAdjust="spacingAndGlyphs">C13</text><text x="2184.0" y="191.6" font-size="15.5" fill="#ececec" textLength="35.7" lengthAdjust="spacingAndGlyphs">+3V3</text><text x="2164.4" y="250.6" font-size="15.5" fill="#ececec" textLength="18.0" lengthAdjust="spacingAndGlyphs">C2</text><text x="2225.8" y="250.6" font-size="15.5" fill="#ececec" textLength="27.3" lengthAdjust="spacingAndGlyphs">C22</text><text x="2305.8" y="250.6" font-size="15.5" fill="#ececec" textLength="18.4" lengthAdjust="spacingAndGlyphs">C4</text><text x="2376.0" y="250.6" font-size="15.5" fill="#ececec" textLength="18.7" lengthAdjust="spacingAndGlyphs">C6</text><text x="2205.8" y="450.6" font-size="13" fill="#8c8c8c" textLength="44.0" lengthAdjust="spacingAndGlyphs">POWER</text><text x="2210.4" y="722.3" font-size="13" fill="#8c8c8c" textLength="35.1" lengthAdjust="spacingAndGlyphs">GPIOs</text><text x="2213.9" y="995.2" font-size="13" fill="#8c8c8c" textLength="28.3" lengthAdjust="spacingAndGlyphs">QSPI</text><text x="2199.2" y="1149.7" font-size="13" fill="#8c8c8c" textLength="57.4" lengthAdjust="spacingAndGlyphs">CONTROL</text><text x="2212.3" y="1268.5" font-size="13" fill="#8c8c8c" textLength="31.5" lengthAdjust="spacingAndGlyphs">VREG</text><text x="2219.1" y="842.8" font-size="15.5" fill="#ececec" textLength="18.9" lengthAdjust="spacingAndGlyphs">U3</text><text x="2397.0" y="356.6" font-size="15.5" fill="#ececec" textLength="34.9" lengthAdjust="spacingAndGlyphs">+3V3</text><text x="2340.0" y="382.4" font-size="7" fill="#4e4e4e" textLength="25.5" lengthAdjust="spacingAndGlyphs">1 IOVDD</text><text x="2340.0" y="406.0" font-size="7" fill="#4e4e4e" textLength="29.0" lengthAdjust="spacingAndGlyphs">38 IOVDD</text><text x="2340.0" y="429.8" font-size="7" fill="#4e4e4e" textLength="29.0" lengthAdjust="spacingAndGlyphs">50 IOVDD</text><text x="2340.0" y="453.6" font-size="7" fill="#4e4e4e" textLength="29.0" lengthAdjust="spacingAndGlyphs">11 IOVDD</text><text x="2340.0" y="477.2" font-size="7" fill="#4e4e4e" textLength="29.0" lengthAdjust="spacingAndGlyphs">45 IOVDD</text><text x="2340.0" y="500.7" font-size="7" fill="#4e4e4e" textLength="29.0" lengthAdjust="spacingAndGlyphs">20 IOVDD</text><text x="2100.0" y="548.0" font-size="7" fill="#4e4e4e" textLength="25.5" lengthAdjust="spacingAndGlyphs">GPIO0 2</text><text x="2100.0" y="572.0" font-size="7" fill="#4e4e4e" textLength="25.5" lengthAdjust="spacingAndGlyphs">GPIO1 3</text><text x="1950.7" y="605.3" font-size="15.5" fill="#ececec" textLength="76.9" lengthAdjust="spacingAndGlyphs">CAM_D0_N</text><text x="2085.0" y="595.5" font-size="7" fill="#4e4e4e" textLength="25.5" lengthAdjust="spacingAndGlyphs">GPIO2 4</text><text x="1950.7" y="629.0" font-size="15.5" fill="#ececec" textLength="77.0" lengthAdjust="spacingAndGlyphs">CAM_D0_P</text><text x="2085.0" y="619.2" font-size="7" fill="#4e4e4e" textLength="25.5" lengthAdjust="spacingAndGlyphs">GPIO3 5</text><text x="1949.8" y="652.7" font-size="15.5" fill="#ececec" textLength="77.8" lengthAdjust="spacingAndGlyphs">CAM_D1_N</text><text x="2085.0" y="642.9" font-size="7" fill="#4e4e4e" textLength="25.5" lengthAdjust="spacingAndGlyphs">GPIO4 6</text><text x="1951.2" y="676.4" font-size="15.5" fill="#ececec" textLength="76.5" lengthAdjust="spacingAndGlyphs">CAM_D1_P</text><text x="2085.0" y="666.6" font-size="7" fill="#4e4e4e" textLength="25.5" lengthAdjust="spacingAndGlyphs">GPIO5 7</text><text x="2007.1" y="700.1" font-size="15.5" fill="#ececec" textLength="44.9" lengthAdjust="spacingAndGlyphs">RELAY</text><text x="2085.0" y="690.3" font-size="7" fill="#4e4e4e" textLength="25.5" lengthAdjust="spacingAndGlyphs">GPIO6 8</text><text x="1963.2" y="723.8" font-size="15.5" fill="#ececec" textLength="63.5" lengthAdjust="spacingAndGlyphs">CAM_IO1</text><text x="2085.0" y="714.0" font-size="7" fill="#4e4e4e" textLength="25.5" lengthAdjust="spacingAndGlyphs">GPIO7 9</text><text x="1949.2" y="747.5" font-size="15.5" fill="#ececec" textLength="78.3" lengthAdjust="spacingAndGlyphs">CAM_CK_N</text><text x="2085.0" y="737.7" font-size="7" fill="#4e4e4e" textLength="29.0" lengthAdjust="spacingAndGlyphs">GPIO8 10</text><text x="2008.6" y="771.2" font-size="15.5" fill="#ececec" textLength="43.4" lengthAdjust="spacingAndGlyphs">GPIO9</text><text x="2085.0" y="761.4" font-size="7" fill="#4e4e4e" textLength="29.2" lengthAdjust="spacingAndGlyphs">GPIO9 11</text><text x="1963.2" y="794.9" font-size="15.5" fill="#ececec" textLength="64.4" lengthAdjust="spacingAndGlyphs">CAM_IO0</text><text x="2085.0" y="785.1" font-size="7" fill="#4e4e4e" textLength="32.8" lengthAdjust="spacingAndGlyphs">GPIO10 12</text><text x="1992.2" y="818.6" font-size="15.5" fill="#ececec" textLength="34.5" lengthAdjust="spacingAndGlyphs">LED1</text><text x="2085.0" y="808.8" font-size="7" fill="#4e4e4e" textLength="32.8" lengthAdjust="spacingAndGlyphs">GPIO11 13</text><text x="2000.0" y="842.3" font-size="15.5" fill="#ececec" textLength="52.1" lengthAdjust="spacingAndGlyphs">GPIO12</text><text x="2085.0" y="832.5" font-size="7" fill="#4e4e4e" textLength="32.8" lengthAdjust="spacingAndGlyphs">GPIO12 14</text><text x="2000.0" y="866.0" font-size="15.5" fill="#ececec" textLength="52.1" lengthAdjust="spacingAndGlyphs">GPIO13</text><text x="2085.0" y="856.2" font-size="7" fill="#4e4e4e" textLength="32.8" lengthAdjust="spacingAndGlyphs">GPIO13 15</text><text x="2000.0" y="889.7" font-size="15.5" fill="#ececec" textLength="52.1" lengthAdjust="spacingAndGlyphs">GPIO14</text><text x="2085.0" y="879.9" font-size="7" fill="#4e4e4e" textLength="32.8" lengthAdjust="spacingAndGlyphs">GPIO14 16</text><text x="2415.7" y="558.2" font-size="15.5" fill="#ececec" textLength="11.4" lengthAdjust="spacingAndGlyphs">G</text><text x="2343.0" y="548.4" font-size="7" fill="#4e4e4e" textLength="32.8" lengthAdjust="spacingAndGlyphs">16 GPIO15</text><text x="2343.0" y="572.6" font-size="7" fill="#4e4e4e" textLength="32.8" lengthAdjust="spacingAndGlyphs">27 GPIO16</text><text x="2415.7" y="605.3" font-size="15.5" fill="#ececec" textLength="11.4" lengthAdjust="spacingAndGlyphs">E</text><text x="2343.0" y="595.5" font-size="7" fill="#4e4e4e" textLength="32.8" lengthAdjust="spacingAndGlyphs">28 GPIO17</text><text x="2415.7" y="629.0" font-size="15.5" fill="#ececec" textLength="11.4" lengthAdjust="spacingAndGlyphs">E</text><text x="2343.0" y="619.2" font-size="7" fill="#4e4e4e" textLength="32.8" lengthAdjust="spacingAndGlyphs">29 GPIO18</text><text x="2415.7" y="652.7" font-size="15.5" fill="#ececec" textLength="11.4" lengthAdjust="spacingAndGlyphs">G</text><text x="2343.0" y="642.9" font-size="7" fill="#4e4e4e" textLength="32.8" lengthAdjust="spacingAndGlyphs">31 GPIO19</text><text x="2343.0" y="666.6" font-size="7" fill="#4e4e4e" textLength="32.8" lengthAdjust="spacingAndGlyphs">32 GPIO20</text><text x="2343.0" y="690.3" font-size="7" fill="#4e4e4e" textLength="32.8" lengthAdjust="spacingAndGlyphs">33 GPIO21</text><text x="2415.7" y="723.8" font-size="15.5" fill="#ececec" textLength="11.3" lengthAdjust="spacingAndGlyphs">F</text><text x="2343.0" y="714.0" font-size="7" fill="#4e4e4e" textLength="32.8" lengthAdjust="spacingAndGlyphs">34 GPIO22</text><text x="2415.7" y="747.5" font-size="15.5" fill="#ececec" textLength="11.3" lengthAdjust="spacingAndGlyphs">F</text><text x="2343.0" y="737.7" font-size="7" fill="#4e4e4e" textLength="32.8" lengthAdjust="spacingAndGlyphs">35 GPIO23</text><text x="2415.7" y="771.2" font-size="15.5" fill="#ececec" textLength="11.3" lengthAdjust="spacingAndGlyphs">F</text><text x="2343.0" y="761.4" font-size="7" fill="#4e4e4e" textLength="32.8" lengthAdjust="spacingAndGlyphs">36 GPIO24</text><text x="2415.7" y="794.9" font-size="15.5" fill="#ececec" textLength="11.3" lengthAdjust="spacingAndGlyphs">F</text><text x="2343.0" y="785.1" font-size="7" fill="#4e4e4e" textLength="32.8" lengthAdjust="spacingAndGlyphs">37 GPIO25</text><text x="2415.7" y="818.6" font-size="15.5" fill="#ececec" textLength="11.4" lengthAdjust="spacingAndGlyphs">G</text><text x="2343.0" y="808.8" font-size="7" fill="#4e4e4e" textLength="51.0" lengthAdjust="spacingAndGlyphs">40 GPIO26_ADC0</text><text x="2343.0" y="832.5" font-size="7" fill="#4e4e4e" textLength="51.0" lengthAdjust="spacingAndGlyphs">41 GPIO27_ADC1</text><text x="2343.0" y="856.2" font-size="7" fill="#4e4e4e" textLength="51.0" lengthAdjust="spacingAndGlyphs">42 GPIO28_ADC2</text><text x="2415.7" y="889.7" font-size="15.5" fill="#ececec" textLength="11.4" lengthAdjust="spacingAndGlyphs">G</text><text x="2343.0" y="879.9" font-size="7" fill="#4e4e4e" textLength="51.0" lengthAdjust="spacingAndGlyphs">43 GPIO29_ADC3</text><text x="1970.4" y="937.5" font-size="15.5" fill="#ececec" textLength="78.8" lengthAdjust="spacingAndGlyphs">QSPI_SCLK</text><text x="2075.0" y="927.7" font-size="7" fill="#4e4e4e" textLength="43.6" lengthAdjust="spacingAndGlyphs">QSPI_SCLK 56</text><text x="1980.2" y="961.4" font-size="15.5" fill="#ececec" textLength="69.2" lengthAdjust="spacingAndGlyphs">QSPI_SD0</text><text x="2075.0" y="951.6" font-size="7" fill="#4e4e4e" textLength="40.0" lengthAdjust="spacingAndGlyphs">QSPI_SD0 56</text><text x="1980.2" y="985.1" font-size="15.5" fill="#ececec" textLength="69.2" lengthAdjust="spacingAndGlyphs">QSPI_SD1</text><text x="2075.0" y="975.3" font-size="7" fill="#4e4e4e" textLength="40.0" lengthAdjust="spacingAndGlyphs">QSPI_SD1 56</text><text x="1980.2" y="1008.7" font-size="15.5" fill="#ececec" textLength="69.2" lengthAdjust="spacingAndGlyphs">QSPI_SD2</text><text x="2075.0" y="998.9" font-size="7" fill="#4e4e4e" textLength="40.0" lengthAdjust="spacingAndGlyphs">QSPI_SD2 56</text><text x="1980.2" y="1032.3" font-size="15.5" fill="#ececec" textLength="69.2" lengthAdjust="spacingAndGlyphs">QSPI_SD3</text><text x="2075.0" y="1022.5" font-size="7" fill="#4e4e4e" textLength="40.0" lengthAdjust="spacingAndGlyphs">QSPI_SD3 56</text><text x="1989.7" y="1056.3" font-size="15.5" fill="#ececec" textLength="59.7" lengthAdjust="spacingAndGlyphs">QSPI_SS</text><text x="2075.0" y="1046.5" font-size="7" fill="#4e4e4e" textLength="36.3" lengthAdjust="spacingAndGlyphs">QSPI_SS 56</text><text x="2023.2" y="1081.2" font-size="15.5" fill="#ececec" textLength="17.9" lengthAdjust="spacingAndGlyphs">R9</text><text x="1856.2" y="1103.3" font-size="15.5" fill="#ececec" textLength="59.7" lengthAdjust="spacingAndGlyphs">USB_DM</text><text x="1859.9" y="1127.2" font-size="15.5" fill="#ececec" textLength="55.9" lengthAdjust="spacingAndGlyphs">USB_DP</text><text x="1985.1" y="1151.2" font-size="15.5" fill="#ececec" textLength="35.2" lengthAdjust="spacingAndGlyphs">+3V3</text><text x="2080.0" y="1093.0" font-size="7" fill="#4e4e4e" textLength="32.7" lengthAdjust="spacingAndGlyphs">USB_DM 51</text><text x="2080.0" y="1117.0" font-size="7" fill="#4e4e4e" textLength="32.9" lengthAdjust="spacingAndGlyphs">USB_DP 52</text><text x="2062.0" y="1141.0" font-size="7" fill="#4e4e4e" textLength="51.0" lengthAdjust="spacingAndGlyphs">USB_OTP_VDD 53</text><text x="1964.3" y="1270.0" font-size="15.5" fill="#ececec" textLength="35.2" lengthAdjust="spacingAndGlyphs">+3V3</text><text x="2067.1" y="1286.9" font-size="15.5" fill="#ececec" textLength="26.6" lengthAdjust="spacingAndGlyphs">C12</text><text x="2067.0" y="1236.0" font-size="7" fill="#4e4e4e" textLength="43.7" lengthAdjust="spacingAndGlyphs">VREG_DGND 47</text><text x="2075.0" y="1260.0" font-size="7" fill="#4e4e4e" textLength="39.9" lengthAdjust="spacingAndGlyphs">VREG_VIN 49</text><text x="2355.7" y="968.5" font-size="15.5" fill="#ececec" textLength="26.6" lengthAdjust="spacingAndGlyphs">C14</text><text x="2412.5" y="1103.3" font-size="15.5" fill="#ececec" textLength="15.4" lengthAdjust="spacingAndGlyphs">R</text><text x="2412.5" y="1174.8" font-size="15.5" fill="#ececec" textLength="15.6" lengthAdjust="spacingAndGlyphs">X</text><text x="2412.5" y="1198.5" font-size="15.5" fill="#ececec" textLength="15.6" lengthAdjust="spacingAndGlyphs">X</text><text x="2405.5" y="1272.0" font-size="15.5" fill="#ececec" textLength="15.5" lengthAdjust="spacingAndGlyphs">L3</text><text x="2342.0" y="928.0" font-size="7" fill="#4e4e4e" textLength="47.3" lengthAdjust="spacingAndGlyphs">64 QSPI_IOVDD</text><text x="2342.0" y="1093.0" font-size="7" fill="#4e4e4e" textLength="21.8" lengthAdjust="spacingAndGlyphs">26 RUN</text><text x="2342.0" y="1117.0" font-size="7" fill="#4e4e4e" textLength="29.0" lengthAdjust="spacingAndGlyphs">24 SWCLK</text><text x="2342.0" y="1141.0" font-size="7" fill="#4e4e4e" textLength="29.1" lengthAdjust="spacingAndGlyphs">25 SWDIO</text><text x="2342.0" y="1165.0" font-size="7" fill="#4e4e4e" textLength="21.7" lengthAdjust="spacingAndGlyphs">21 XIN</text><text x="2342.0" y="1189.0" font-size="7" fill="#4e4e4e" textLength="25.4" lengthAdjust="spacingAndGlyphs">22 XOUT</text><text x="2342.0" y="1236.0" font-size="7" fill="#4e4e4e" textLength="43.6" lengthAdjust="spacingAndGlyphs">46 VREG_AVDD</text><text x="2342.0" y="1260.0" font-size="7" fill="#4e4e4e" textLength="36.3" lengthAdjust="spacingAndGlyphs">50 VREG_FB</text><text x="2342.0" y="1284.0" font-size="7" fill="#4e4e4e" textLength="36.4" lengthAdjust="spacingAndGlyphs">48 VREG_LX</text><text x="1524.2" y="706.0" font-size="15.5" fill="#ececec" textLength="30.4" lengthAdjust="spacingAndGlyphs">SW1</text><text x="1593.4" y="819.2" font-size="15.5" fill="#ececec" textLength="25.7" lengthAdjust="spacingAndGlyphs">R16</text><text x="1675.8" y="741.0" font-size="15.5" fill="#ececec" textLength="35.1" lengthAdjust="spacingAndGlyphs">+3V3</text><text x="1711.0" y="823.2" font-size="15.5" fill="#ececec" textLength="25.0" lengthAdjust="spacingAndGlyphs">R11</text><text x="1565.0" y="847.4" font-size="15.5" fill="#ececec" textLength="18.0" lengthAdjust="spacingAndGlyphs">U2</text><text x="1752.6" y="879.7" font-size="15.5" fill="#ececec" textLength="58.8" lengthAdjust="spacingAndGlyphs">QSPI_SS</text><text x="1752.6" y="896.8" font-size="15.5" fill="#ececec" textLength="78.1" lengthAdjust="spacingAndGlyphs">QSPI_SCLK</text><text x="1752.6" y="914.0" font-size="15.5" fill="#ececec" textLength="68.5" lengthAdjust="spacingAndGlyphs">QSPI_SD0</text><text x="1752.6" y="931.0" font-size="15.5" fill="#ececec" textLength="67.8" lengthAdjust="spacingAndGlyphs">QSPI_SD1</text><text x="1752.6" y="955.3" font-size="15.5" fill="#ececec" textLength="68.5" lengthAdjust="spacingAndGlyphs">QSPI_SD2</text><text x="1752.6" y="973.2" font-size="15.5" fill="#ececec" textLength="68.5" lengthAdjust="spacingAndGlyphs">QSPI_SD3</text><text x="1638.0" y="871.0" font-size="7" fill="#4e4e4e" textLength="18.2" lengthAdjust="spacingAndGlyphs">1 /CS</text><text x="1638.0" y="887.0" font-size="7" fill="#4e4e4e" textLength="18.2" lengthAdjust="spacingAndGlyphs">6 CLK</text><text x="1638.0" y="905.0" font-size="7" fill="#4e4e4e" textLength="29.1" lengthAdjust="spacingAndGlyphs">5 DI_IO0</text><text x="1638.0" y="922.0" font-size="7" fill="#4e4e4e" textLength="29.1" lengthAdjust="spacingAndGlyphs">2 DO_IO1</text><text x="1638.0" y="947.0" font-size="7" fill="#4e4e4e" textLength="32.7" lengthAdjust="spacingAndGlyphs">3 /WP_IO2</text><text x="1638.0" y="964.0" font-size="7" fill="#4e4e4e" textLength="76.4" lengthAdjust="spacingAndGlyphs">7 /HOLD_OR_/RESET_IO3</text><text x="1490.0" y="871.0" font-size="7" fill="#4e4e4e" textLength="18.3" lengthAdjust="spacingAndGlyphs">VCC 8</text><text x="1493.0" y="922.0" font-size="7" fill="#4e4e4e" textLength="14.6" lengthAdjust="spacingAndGlyphs">EP 9</text><text x="1490.0" y="964.0" font-size="7" fill="#4e4e4e" textLength="18.3" lengthAdjust="spacingAndGlyphs">VSS 4</text><text x="1386.0" y="844.2" font-size="15.5" fill="#ececec" textLength="35.5" lengthAdjust="spacingAndGlyphs">+3V3</text><text x="1357.4" y="914.7" font-size="15.5" fill="#ececec" textLength="26.7" lengthAdjust="spacingAndGlyphs">C18</text><text x="1454.7" y="912.6" font-size="15.5" fill="#ececec" textLength="26.8" lengthAdjust="spacingAndGlyphs">C15</text><text x="1512.2" y="1120.8" font-size="15.5" fill="#ececec" textLength="37.7" lengthAdjust="spacingAndGlyphs">VSYS</text><text x="1485.8" y="1171.2" font-size="15.5" fill="#ececec" textLength="26.3" lengthAdjust="spacingAndGlyphs">R18</text><text x="1437.2" y="1264.4" font-size="15.5" fill="#ececec" textLength="25.3" lengthAdjust="spacingAndGlyphs">C11</text><text x="1548.3" y="1263.2" font-size="15.5" fill="#ececec" textLength="25.9" lengthAdjust="spacingAndGlyphs">R15</text><text x="1590.6" y="1120.8" font-size="15.5" fill="#ececec" textLength="34.8" lengthAdjust="spacingAndGlyphs">+3V3</text><text x="1580.0" y="1200.0" font-size="7" fill="#4e4e4e" textLength="10.9" lengthAdjust="spacingAndGlyphs">1 3</text><text x="1615.0" y="1200.0" font-size="7" fill="#4e4e4e" textLength="10.9" lengthAdjust="spacingAndGlyphs">2 8</text><text x="1589.8" y="1238.4" font-size="15.5" fill="#ececec" textLength="17.4" lengthAdjust="spacingAndGlyphs">Q1</text><text x="1609.2" y="1256.6" font-size="15.5" fill="#ececec" textLength="25.9" lengthAdjust="spacingAndGlyphs">R19</text><text x="1702.4" y="1208.9" font-size="15.5" fill="#ececec" textLength="99.0" lengthAdjust="spacingAndGlyphs">GPIO29_ADC3</text><text x="2373.9" y="1493.5" font-size="15.5" fill="#ececec" textLength="36.4" lengthAdjust="spacingAndGlyphs">VSYS</text><text x="2353.0" y="1546.4" font-size="15.5" fill="#ececec" textLength="34.0" lengthAdjust="spacingAndGlyphs">LED2</text><text x="2415.0" y="1539.0" font-size="15.5" fill="#ececec" textLength="12.9" lengthAdjust="spacingAndGlyphs">R</text></svg><div class="b" style="left:32px;top:1392px;width:68px;height:68px;border-radius:34px;background:#2d2d2d;"></div><svg class="b" style="left:52px;top:1412px" width="28" height="28" viewBox="0 0 28 28"><path d="M2 10 L2 2 L10 2 M18 2 L26 2 L26 10 M26 18 L26 26 L18 26 M10 26 L2 26 L2 18" fill="none" stroke="#fff" stroke-width="3.4"/></svg>
<div class="b" style="left:0;top:0;width:1560px;height:10px;background:linear-gradient(#080808,rgba(15,15,15,0));"></div>
</div>
<div class="b" style="left:1960px;top:1478px;width:429px;height:68px;background:#2e2e2e;border-radius:34px;box-shadow:0 2px 8px rgba(0,0,0,.4);"></div><svg class="b" style="left:1985px;top:1492px" width="220" height="40" viewBox="0 0 220 40"><circle cx="19" cy="20" r="13.3" fill="#e2513f"/><path d="M13.5 14.5 L24.5 25.5 M24.5 14.5 L13.5 25.5" stroke="#2e2e2e" stroke-width="3"/><path d="M105 7 L120 31.5 L90.5 31.5 Z" fill="#f0a033"/><path d="M105 16 L105 24 M105 26.5 L105 29" stroke="#2e2e2e" stroke-width="2.6"/><circle cx="191" cy="20" r="13.2" fill="#4a90e2"/><path d="M191 17 L191 28 M191 12 L191 14.5" stroke="#2e2e2e" stroke-width="3"/></svg><span class="t" style="left:2029.3px;top:1497.8px;font-size:28px;color:#f2f2f2;transform:scaleX(0.9545);-webkit-text-stroke:0.6px #f2f2f2;">67</span><span class="t" style="left:2116.0px;top:1497.8px;font-size:28px;color:#f2f2f2;transform:scaleX(0.9325);-webkit-text-stroke:0.6px #f2f2f2;">14</span><span class="t" style="left:2200.4px;top:1497.8px;font-size:28px;color:#f2f2f2;transform:scaleX(0.9576);-webkit-text-stroke:0.6px #f2f2f2;">67</span><span class="t" style="left:2254.3px;top:1497.8px;font-size:28px;color:#f2f2f2;transform:scaleX(0.9986);-webkit-text-stroke:0.6px #f2f2f2;">Reviews</span>
<div class="b" style="left:0px;top:0px;width:2948px;height:86px;background:#2e2e2e;"></div><svg class="b" style="left:0;top:0" width="100" height="86" viewBox="0 0 100 86">
<path d="M14 10 L54 10 L54 20 L26 20 L26 32 L52 32 L52 42 L26 42 L26 66 L14 66 L14 57 L10 53.5 L19 47.5 L10 41.5 L19 35 L10 29 L19 24 L14 20 Z" fill="none" stroke="#74f3c2" stroke-width="4" stroke-linejoin="miter"/>
<path d="M68 34 L84 34 L76 43 Z" fill="#fff"/>
</svg><span class="t" style="left:121.0px;top:6.3px;font-size:28px;color:#f2f2f2;transform:scaleX(0.9957);-webkit-text-stroke:0.3px #f2f2f2;">flux-docs / PICO Smart Automation Controlle...</span><span class="t" style="left:121.0px;top:46.7px;font-size:24px;color:#a3a3a3;transform:scaleX(0.9625);-webkit-text-stroke:0.3px #a3a3a3;">Loaded</span><div class="b" style="left:745px;top:6px;width:140px;height:64px;border:2px solid #1b1b1b;border-radius:9px;box-sizing:border-box;"></div><div class="b" style="left:825px;top:8px;width:2px;height:60px;background:#1b1b1b;"></div><svg class="b" style="left:0;top:0" width="1200" height="86" viewBox="0 0 1200 86"><path d="M782.0 23.7 L785.7 34.3 L796.8 34.5 L787.9 41.2 L791.2 51.9 L782.0 45.5 L772.8 51.9 L776.1 41.2 L767.2 34.5 L778.3 34.3 Z" fill="none" stroke="#fff" stroke-width="2.5" stroke-linejoin="miter"/></svg><span class="t" style="left:848.0px;top:23.8px;font-size:28px;color:#f2f2f2;transform:scaleX(0.8387);-webkit-text-stroke:0.3px #f2f2f2;">0</span><div class="b" style="left:901px;top:6px;width:140px;height:64px;border:2px solid #1b1b1b;border-radius:9px;box-sizing:border-box;"></div><div class="b" style="left:981px;top:8px;width:2px;height:60px;background:#1b1b1b;"></div><svg class="b" style="left:920px;top:20px" width="36" height="36" viewBox="0 0 36 36">
<path d="M18 31 L18 18 L8 8" fill="none" stroke="#7a7a7a" stroke-width="4"/>
<path d="M4 4 L14 4 L4 14 Z" fill="#7a7a7a"/>
<path d="M21 15 L28 8" fill="none" stroke="#7a7a7a" stroke-width="4"/>
<path d="M32 4 L32 14 L22 4 Z" fill="#7a7a7a"/>
</svg><span class="t" style="left:1004.5px;top:23.8px;font-size:28px;color:#f2f2f2;transform:scaleX(0.8387);-webkit-text-stroke:0.3px #f2f2f2;">6</span><div class="b" style="left:1057px;top:6px;width:60px;height:64px;border:2px solid #1b1b1b;border-radius:9px;box-sizing:border-box;"></div><svg class="b" style="left:1070px;top:20px" width="32" height="38" viewBox="0 0 32 38">
<path d="M16 3 C8 3 4 9 4 14.5 C4 19 7 22 9 24 L9 28 L23 28 L23 24 C25 22 28 19 28 14.5 C28 9 24 3 16 3 Z" fill="#fff"/>
<path d="M9 30 L23 30 L23 32 C21 34 19 35 16 35.5 C13 35 11 34 9 32 Z" fill="#fff"/>
<path d="M12 11 L16 15.5 L20 11 M16 15.5 L16 20" fill="none" stroke="#2e2e2e" stroke-width="2"/>
<path d="M11 25 L21 25 M11 28.5 L21 28.5" fill="none" stroke="#2e2e2e" stroke-width="1.6"/>
</svg><div class="b" style="left:1280px;top:6px;width:395px;height:64px;border:2px solid #1b1b1b;border-radius:9px;box-sizing:border-box;overflow:hidden;"></div><div class="b" style="left:1389px;top:9px;width:181px;height:58px;background:#333c39;"></div><div class="b" style="left:1388px;top:9px;width:2px;height:58px;background:#1b1b1b;"></div><div class="b" style="left:1570px;top:9px;width:2px;height:58px;background:#1b1b1b;"></div><span class="t" style="left:1307.0px;top:24.0px;font-size:29px;color:#f2f2f2;transform:scaleX(0.9143);-webkit-text-stroke:0.3px #f2f2f2;">Files</span><span class="t" style="left:1414.0px;top:24.0px;font-size:29px;color:#74f3c2;transform:scaleX(0.9668);-webkit-text-stroke:0.3px #74f3c2;">Schematic</span><span class="t" style="left:1596.0px;top:24.0px;font-size:29px;color:#f2f2f2;transform:scaleX(0.8703);-webkit-text-stroke:0.3px #f2f2f2;">PCB</span><div class="b" style="left:2523px;top:6px;width:106px;height:64px;border:2px solid #1b1b1b;border-radius:9px;box-sizing:border-box;"></div><svg class="b" style="left:2535px;top:14px" width="45" height="48" viewBox="0 0 45 48">
<path d="M21 12.2 A11.5 11.5 0 0 1 30.96 29.45" fill="none" stroke="#4aaef5" stroke-width="3.4"/>
<path d="M20.7 5.8 L14.2 12.5 L20.7 19 Z" fill="#4aaef5"/>
<path d="M21 35.2 A11.5 11.5 0 0 1 11.04 17.95" fill="none" stroke="#4aaef5" stroke-width="3.4"/>
<path d="M21.2 29.1 L27.7 35.5 L21.2 41.9 Z" fill="#4aaef5"/>
</svg><span class="t" style="left:2592.5px;top:24.3px;font-size:28px;color:#f2f2f2;transform:scaleX(0.9032);-webkit-text-stroke:0.3px #f2f2f2;">3</span><div class="b" style="left:2646px;top:6px;width:160px;height:64px;background:#78f5c5;border-radius:9px;box-shadow:0 2px 4px rgba(0,0,0,.35);"></div><svg class="b" style="left:2664px;top:18px" width="32" height="38" viewBox="0 0 32 38">
<path d="M9 17 L9 12 A7 7 0 0 1 23 12 L23 17" fill="none" stroke="#000" stroke-width="3.6"/>
<rect x="4" y="16" width="24" height="19" rx="2.5" fill="#000"/>
<circle cx="16" cy="25.5" r="2.6" fill="#78f5c5"/>
</svg><span class="t" style="left:2714.5px;top:24.3px;font-size:28px;color:#000;transform:scaleX(0.9068);font-weight:700;">Share</span><svg class="b" style="left:2840px;top:0" width="108" height="86" viewBox="0 0 108 86">
<path d="M20 17 L49 17 L49 24.5 L29 24.5 L29 34 L48 34 L48 41.5 L29 41.5 L29 59.5 L20 59.5 L20 53 L17 50.5 L23 46 L17 41.5 L23 37 L17 32.5 L23 28.5 L20 25 Z" fill="none" stroke="#74f3c2" stroke-width="1.8"/>
<path d="M78 34 L94 34 L86 43 Z" fill="#fff"/>
</svg>
<div class="b" style="left:0px;top:86px;width:862px;height:1480px;background:#2e2e2e;"></div><div class="b" style="left:0px;top:86px;width:862px;height:6px;background:linear-gradient(#242424,#2e2e2e);"></div><svg class="b" style="left:10px;top:114px" width="28" height="28" viewBox="0 0 28 28">
<path d="M14 2 L14 24 M3 13 L25 13" stroke="#e38bf6" stroke-width="2.6"/></svg><span class="t" style="left:58.8px;top:112.3px;font-size:28px;color:#e38bf6;transform:scaleX(0.9587);-webkit-text-stroke:0.6px #e38bf6;">New</span><span class="t" style="left:226.0px;top:112.3px;font-size:28px;color:#f2f2f2;transform:scaleX(0.9924);-webkit-text-stroke:0.3px #f2f2f2;">Project Description Guidance</span><svg class="b" style="left:696px;top:114px" width="32" height="26" viewBox="0 0 32 26">
<path d="M2 4 L29 4 M2 12.5 L29 12.5 M2 21 L29 21" stroke="#e38bf6" stroke-width="2.8"/></svg><span class="t" style="left:746.3px;top:112.3px;font-size:28px;color:#e38bf6;transform:scaleX(1.0131);-webkit-text-stroke:0.6px #e38bf6;">History</span><div class="b" style="left:0px;top:164.5px;width:845px;height:2.5px;background:#1f1f1f;"></div><div class="b" style="left:0px;top:167px;width:845px;height:3px;background:linear-gradient(rgba(20,20,20,.5),rgba(46,46,46,0));"></div><div class="b" style="left:360.8px;top:165.6px;width:3.1999999999999886px;height:2.4000000000000057px;background:#f0f0f0;border-radius:1px;"></div><div class="b" style="left:585px;top:165.6px;width:3.2000000000000455px;height:2.4000000000000057px;background:#f0f0f0;border-radius:1px;"></div><span class="t" style="left:38.0px;top:178.6px;font-size:28px;color:#f2f2f2;transform:scaleX(1.0210);-webkit-text-stroke:0.3px #f2f2f2;">monitoring</span><span class="t" style="left:14.0px;top:233.8px;font-size:28px;color:#f2f2f2;transform:scaleX(0.9246);font-weight:700;">Block Diagram:</span><span class="t" style="left:1.0px;top:306.3px;font-size:28px;color:#f2f2f2;transform:scaleX(0.9032);-webkit-text-stroke:0.3px #f2f2f2;">1.</span><span class="t" style="left:38.0px;top:306.3px;font-size:28px;color:#f2f2f2;transform:scaleX(1.0044);-webkit-text-stroke:0.3px #f2f2f2;">Power Management – supports USB/ battery input</span><span class="t" style="left:1.0px;top:345.8px;font-size:28px;color:#f2f2f2;transform:scaleX(0.9032);-webkit-text-stroke:0.3px #f2f2f2;">2.</span><span class="t" style="left:38.0px;top:345.8px;font-size:28px;color:#f2f2f2;transform:scaleX(0.9981);-webkit-text-stroke:0.3px #f2f2f2;">Wideband Antenna + Low-Noise Amplifier</span><span class="t" style="left:1.0px;top:386.3px;font-size:28px;color:#f2f2f2;transform:scaleX(0.9032);-webkit-text-stroke:0.3px #f2f2f2;">3.</span><span class="t" style="left:38.0px;top:386.3px;font-size:28px;color:#f2f2f2;transform:scaleX(0.9659);-webkit-text-stroke:0.3px #f2f2f2;">RF Front-End (Mixer, Filters, Detector)</span><span class="t" style="left:1.0px;top:426.3px;font-size:28px;color:#f2f2f2;transform:scaleX(0.9032);-webkit-text-stroke:0.3px #f2f2f2;">4.</span><span class="t" style="left:38.0px;top:426.3px;font-size:28px;color:#f2f2f2;transform:scaleX(1.0226);-webkit-text-stroke:0.3px #f2f2f2;">Microcontroller/Processor (w/ firmware for scanning &amp;</span><span class="t" style="left:38.0px;top:465.3px;font-size:28px;color:#f2f2f2;transform:scaleX(1.0214);-webkit-text-stroke:0.3px #f2f2f2;">control)</span><span class="t" style="left:1.0px;top:506.8px;font-size:28px;color:#f2f2f2;transform:scaleX(0.9032);-webkit-text-stroke:0.3px #f2f2f2;">5.</span><span class="t" style="left:38.0px;top:506.8px;font-size:28px;color:#f2f2f2;transform:scaleX(0.9823);-webkit-text-stroke:0.3px #f2f2f2;">Display Interface (OLED/LCD, touchscreen optional)</span><span class="t" style="left:1.0px;top:546.8px;font-size:28px;color:#f2f2f2;transform:scaleX(0.9032);-webkit-text-stroke:0.3px #f2f2f2;">6.</span><span class="t" style="left:38.0px;top:546.8px;font-size:28px;color:#f2f2f2;transform:scaleX(0.9906);-webkit-text-stroke:0.3px #f2f2f2;">User Input (buttons, rotary encoder, or touch)</span><span class="t" style="left:1.0px;top:587.3px;font-size:28px;color:#f2f2f2;transform:scaleX(0.9032);-webkit-text-stroke:0.3px #f2f2f2;">7.</span><span class="t" style="left:38.0px;top:587.3px;font-size:28px;color:#f2f2f2;transform:scaleX(0.9902);-webkit-text-stroke:0.3px #f2f2f2;">Wireless Transmitter/Receiver Module (configurable, e.g., Wi-</span><span class="t" style="left:38.0px;top:626.8px;font-size:28px;color:#f2f2f2;transform:scaleX(0.9615);-webkit-text-stroke:0.3px #f2f2f2;">Fi, proprietary RF)</span><span class="t" style="left:1.0px;top:667.3px;font-size:28px;color:#f2f2f2;transform:scaleX(0.9032);-webkit-text-stroke:0.3px #f2f2f2;">8.</span><span class="t" style="left:38.0px;top:667.3px;font-size:28px;color:#f2f2f2;transform:scaleX(0.9328);-webkit-text-stroke:0.3px #f2f2f2;">Expansion I/O (GPIO, UART, I2C, SPI)</span><span class="t" style="left:14.0px;top:723.3px;font-size:28px;color:#f2f2f2;transform:scaleX(1.0039);-webkit-text-stroke:0.3px #f2f2f2;">For ease of duplication and customization, all design files</span><span class="t" style="left:14.0px;top:763.3px;font-size:28px;color:#f2f2f2;transform:scaleX(0.9848);-webkit-text-stroke:0.3px #f2f2f2;">(schematic, PCB layout, BOM) are open and modular, supporting</span><span class="t" style="left:14.0px;top:803.3px;font-size:28px;color:#f2f2f2;transform:scaleX(1.0114);-webkit-text-stroke:0.3px #f2f2f2;">rapid iteration for different RF subsystems or microcontroller</span><span class="t" style="left:14.0px;top:842.3px;font-size:28px;color:#f2f2f2;transform:scaleX(0.9929);-webkit-text-stroke:0.3px #f2f2f2;">variants.</span><div class="b" style="left:14px;top:908px;width:800px;height:3px;background:#1c1c1c;"></div><span class="t" style="left:14.0px;top:949.3px;font-size:28px;color:#f2f2f2;transform:scaleX(1.0101);-webkit-text-stroke:0.3px #f2f2f2;">Let me know if you want a more technical/marketing</span><span class="t" style="left:14.0px;top:989.0px;font-size:28px;color:#f2f2f2;transform:scaleX(1.0077);-webkit-text-stroke:0.3px #f2f2f2;">description, or specific requirements tailored to a component or</span><span class="t" style="left:14.0px;top:1028.5px;font-size:28px;color:#f2f2f2;transform:scaleX(1.0190);-webkit-text-stroke:0.3px #f2f2f2;">software stack!</span><div class="b" style="left:14px;top:1077px;width:302px;height:47px;border:2px solid #3d6790;background:#2c333b;border-radius:24px;box-sizing:border-box;"></div><div class="b" style="left:333px;top:1077px;width:305px;height:47px;border:2px solid #3d6790;background:#2c333b;border-radius:24px;box-sizing:border-box;"></div><div class="b" style="left:0;top:1070px;width:846px;height:60px;overflow:hidden;"><div class="b" style="left:654px;top:7px;width:260px;height:47px;border:2px solid #3d6790;background:#2c333b;border-radius:24px;box-sizing:border-box;"></div></div><span class="t" style="left:32.0px;top:1085.3px;font-size:28px;color:#f2f2f2;transform:scaleX(0.9289);-webkit-text-stroke:0.3px #f2f2f2;">Select LNA component</span><span class="t" style="left:349.5px;top:1085.3px;font-size:28px;color:#f2f2f2;transform:scaleX(0.9375);-webkit-text-stroke:0.3px #f2f2f2;">Choose microcontroller</span><div class="b" style="left:0;top:1070px;width:846px;height:60px;overflow:hidden;"><span class="t" style="left:672.0px;top:15.3px;font-size:28px;color:#f2f2f2;transform:scaleX(0.9329);-webkit-text-stroke:0.3px #f2f2f2;">Calculate detection threshold</span></div><div class="b" style="left:846px;top:821px;width:16px;height:369px;background:#777777;border-radius:8px;"></div><div class="b" style="left:0px;top:1192px;width:862px;height:86px;background:#202020;border-top:2px solid #1a1c1b;border-bottom:2px solid #1a1c1b;box-sizing:border-box;"></div><svg class="b" style="left:14px;top:1219px" width="40" height="35" viewBox="0 0 40 35"><ellipse cx="19.5" cy="17" rx="15" ry="17" fill="#fff"/><ellipse cx="19.5" cy="19.6" rx="13.6" ry="10.8" fill="#1f1f1f"/><rect x="0" y="11" width="7" height="12.5" rx="2.5" fill="#fff"/><rect x="36.3" y="5" width="3.2" height="17.5" rx="1.6" fill="#fff"/><path d="M8 15 Q11 10.5 17.5 10.2 Q12 14.5 10.5 22.5 Q7 19.5 8 15 Z" fill="#fff"/><path d="M22.6 24.6 L31.5 23" stroke="#fff" stroke-width="2.8" stroke-linecap="round"/></svg><span class="t" style="left:70.0px;top:1222.8px;font-size:28px;color:#8c8c8c;transform:scaleX(0.9326);font-weight:700;">Ready.</span><div class="b" style="left:14px;top:1310px;width:816px;height:156px;border:2px solid #5c5c5c;border-radius:9px;box-sizing:border-box;"></div><span class="t" style="left:42.2px;top:1333.6px;font-size:32px;color:#8f8f8f;transform:scaleX(0.9956);-webkit-text-stroke:0.3px #8f8f8f;">Ask a question or tell Flux what to do...</span><svg class="b" style="left:24px;top:1490px" width="100" height="48" viewBox="0 0 100 48">
<path d="M11 14 L11 34 A6.5 6.5 0 0 0 24 34 L24 11 A4.5 4.5 0 0 0 15 11 L15 32" fill="none" stroke="#9a9a9a" stroke-width="2.6"/>
<path d="M50.5 22.6 A18.3 18.3 0 0 1 85.5 22.6" fill="none" stroke="#9a9a9a" stroke-width="3"/>
<path d="M57.5 27.5 A11.2 11.2 0 0 1 78.5 27.5" fill="none" stroke="#9a9a9a" stroke-width="3"/>
<circle cx="68" cy="24.3" r="3.6" fill="#9a9a9a"/>
<path d="M68 26 L68 33 M61.5 41.5 L68 33 L74.5 41.5" fill="none" stroke="#9a9a9a" stroke-width="3"/>
</svg><div class="b" style="left:684px;top:1482px;width:146px;height:64px;background:#474747;border-radius:9px;"></div><span class="t" style="left:704.0px;top:1500.8px;font-size:28px;color:#8c8c8c;transform:scaleX(0.9124);font-weight:700;">Send</span><svg class="b" style="left:780px;top:1500px" width="36" height="28" viewBox="0 0 36 28">
<path d="M31 3 L31 15 L10 15" fill="none" stroke="#8c8c8c" stroke-width="3.4"/>
<path d="M3 15 L12 8 L12 22 Z" fill="#8c8c8c"/>
</svg>
<div class="b" style="left:2422px;top:86px;width:526px;height:1480px;background:#2e2e2e;"></div><div class="b" style="left:2422px;top:86px;width:526px;height:10px;background:linear-gradient(#232323,#2e2e2e);"></div><span class="t" style="left:2510.3px;top:119.6px;font-size:30px;color:#9c9c9c;transform:scaleX(0.9868);-webkit-text-stroke:0.6px #9c9c9c;">Objects</span><span class="t" style="left:2790.3px;top:119.6px;font-size:30px;color:#74f3c2;transform:scaleX(0.9962);-webkit-text-stroke:0.6px #74f3c2;">Library</span><div class="b" style="left:2422px;top:182px;width:526px;height:2px;background:#1c1c1c;"></div><div class="b" style="left:2698px;top:178px;width:250px;height:4px;background:#74f3c2;"></div><div class="b" style="left:2438px;top:200px;width:510px;height:59px;background:#1e1f1f;"></div><svg class="b" style="left:2452px;top:206px" width="48" height="48" viewBox="0 0 48 48">
<circle cx="19" cy="19" r="12" fill="none" stroke="#fff" stroke-width="4"/>
<path d="M28 28 L40 40" stroke="#fff" stroke-width="4.4"/>
</svg><span class="t" style="left:2508.5px;top:215.8px;font-size:28px;color:#f2f2f2;transform:scaleX(0.9695);-webkit-text-stroke:0.3px #f2f2f2;">STM32</span><svg class="b" style="left:2846px;top:214px" width="32" height="32" viewBox="0 0 32 32">
<path d="M5 5 L27 27 M27 5 L5 27" stroke="#fff" stroke-width="3"/>
</svg><svg class="b" style="left:2894px;top:213px" width="40" height="35" viewBox="0 0 40 35"><ellipse cx="19.5" cy="17" rx="15" ry="17" fill="#fff"/><ellipse cx="19.5" cy="19.6" rx="13.6" ry="10.8" fill="#1e1f1f"/><rect x="0" y="11" width="7" height="12.5" rx="2.5" fill="#fff"/><rect x="36.3" y="5" width="3.2" height="17.5" rx="1.6" fill="#fff"/><path d="M8 15 Q11 10.5 17.5 10.2 Q12 14.5 10.5 22.5 Q7 19.5 8 15 Z" fill="#fff"/><path d="M22.6 24.6 L31.5 23" stroke="#fff" stroke-width="2.8" stroke-linecap="round"/></svg><svg class="b" style="left:2422px;top:280px" width="526" height="44" viewBox="0 0 526 44">
<path d="M40 4 L44.5 15 L56 15.5 L47 23 L50 34.5 L40 28 L30 34.5 L33 23 L24 15.5 L35.5 15 Z" fill="#9e9e9e"/>
<g transform="translate(0 3.5)"><circle cx="88" cy="10" r="5.5" fill="#9e9e9e"/>
<path d="M76 33 C76 24 82 21 88 21 C94 21 100 24 100 33 Z" fill="#9e9e9e"/>
<circle cx="124" cy="7" r="2.5" fill="#9e9e9e"/><circle cx="124" cy="16" r="2.5" fill="#9e9e9e"/><circle cx="124" cy="25" r="2.5" fill="#9e9e9e"/>
<path d="M130 7 L150 7 M130 16 L150 16 M130 25 L150 25" stroke="#9e9e9e" stroke-width="3"/>
</g><path d="M167 4 L173 4 L178 20 L193 20 L197 9 L175 9" fill="none" stroke="#9e9e9e" stroke-width="3"/>
<path d="M175 9 L197 9 L193 20 L178 20 Z" fill="#9e9e9e"/>
<path d="M178 20 L176 25 L195 25" fill="none" stroke="#9e9e9e" stroke-width="2.5"/>
<circle cx="178" cy="30" r="2.6" fill="#9e9e9e"/><circle cx="192" cy="30" r="2.6" fill="#9e9e9e"/>
<g transform="translate(0 5)"><path d="M217 28 L217 14 L225 9 L225 14 L233 9 L233 14 L241 9 L241 2 L247 2 L247 28 Z" fill="#9e9e9e"/>
<rect x="223" y="19" width="2.5" height="5" fill="#2e2e2e"/><rect x="229" y="19" width="2.5" height="5" fill="#2e2e2e"/><rect x="235" y="19" width="2.5" height="5" fill="#2e2e2e"/>
</g><rect x="270" y="6" width="20" height="22" rx="2" fill="none" stroke="#9e9e9e" stroke-width="3"/>
<rect x="276" y="12" width="8" height="9" fill="#9e9e9e"/>
<path d="M274 2 L274 6 M280 2 L280 6 M286 2 L286 6 M274 28 L274 32 M280 28 L280 32 M286 28 L286 32 M266 11 L270 11 M266 17 L270 17 M266 23 L270 23 M290 11 L294 11 M290 17 L294 17 M290 23 L294 23" stroke="#9e9e9e" stroke-width="2"/>
<g transform="translate(0 2)"><rect x="313" y="8" width="30" height="20" rx="3" fill="none" stroke="#9e9e9e" stroke-width="3.5"/>
</g><path d="M363 11 L383 11 M363 27 L383 27" stroke="#9e9e9e" stroke-width="3"/>
<circle cx="386" cy="11" r="4.2" fill="none" stroke="#9e9e9e" stroke-width="3"/><circle cx="386" cy="27" r="4.2" fill="none" stroke="#9e9e9e" stroke-width="3"/>
<rect x="410" y="6" width="27" height="28" rx="2.5" fill="#9e9e9e"/>
<rect x="419" y="2" width="9" height="6" rx="2" fill="#9e9e9e"/>
<path d="M416 20 L421 25 L431 15" fill="none" stroke="#2e2e2e" stroke-width="3"/>
<ellipse cx="462" cy="12" rx="6" ry="9" fill="#9e9e9e"/><path d="M457 23 L467 23 L466 28 C464 31 459 31 458 28 Z" fill="#9e9e9e"/>
<ellipse cx="478" cy="20" rx="6" ry="9" fill="#9e9e9e"/><path d="M473 31 L483 31 L482 36 C480 39 475 39 474 36 Z" fill="#9e9e9e"/>
<rect x="507" y="6" width="30" height="26" rx="2" fill="none" stroke="#9e9e9e" stroke-width="3"/>
<rect x="512" y="11" width="8" height="7" fill="#9e9e9e"/><rect x="522" y="11" width="8" height="7" fill="#9e9e9e"/><rect x="512" y="20" width="8" height="7" fill="#9e9e9e"/><rect x="522" y="20" width="8" height="7" fill="#9e9e9e"/>
</svg><div class="b" style="left:2422px;top:333px;width:526px;height:3px;background:#1c1c1c;"></div><span class="t" style="left:2439.0px;top:351.7px;font-size:24px;color:#f2f2f2;transform:scaleX(0.9676);-webkit-text-stroke:0.3px #f2f2f2;">Found 3k</span><div class="b" style="left:2422px;top:393px;width:526px;height:3px;background:#1c1c1c;"></div><svg class="b" style="left:0;top:0" width="2948" height="1566" viewBox="0 0 2948 1566"><path d="M2509.3 462.4 L2565.1 488.3" stroke="#d2d2d2" stroke-width="9" stroke-dasharray="2.4 2.2"/><path d="M2570.7 504.2 L2543.0 556.0" stroke="#d2d2d2" stroke-width="9" stroke-dasharray="2.4 2.2"/><path d="M2526.7 561.2 L2470.4 535.3" stroke="#d2d2d2" stroke-width="9" stroke-dasharray="2.4 2.2"/><path d="M2464.8 519.4 L2492.9 467.6" stroke="#d2d2d2" stroke-width="9" stroke-dasharray="2.4 2.2"/><path d="M2500.4 463.3 L2570.2 495.6 L2535.6 560.3 L2465.2 528 Z" fill="#5c5c5c" stroke="#4a4a4a" stroke-width="1"/><path d="M2570.2 495.6 L2535.6 560.3 L2465.2 528" fill="none" stroke="#111" stroke-width="3"/><circle cx="2474.6" cy="524.8" r="2.8" fill="#3a3a3a" stroke="#222" stroke-width="1"/></svg><span class="t" style="left:2602.3px;top:422.3px;font-size:28px;color:#f2f2f2;transform:scaleX(0.9561);-webkit-text-stroke:0.3px #f2f2f2;">STM32F405RGT6</span><span class="t" style="left:2602.3px;top:471.7px;font-size:24px;color:#a3a3a3;transform:scaleX(0.9850);-webkit-text-stroke:0.3px #a3a3a3;">ARM® Cortex®-M4 STM32F4</span><span class="t" style="left:2602.3px;top:504.0px;font-size:24px;color:#a3a3a3;transform:scaleX(0.9827);-webkit-text-stroke:0.3px #a3a3a3;">Microcontroller IC 32-Bit...</span><span class="t" style="left:2603.0px;top:545.7px;font-size:24px;color:#74f3c2;transform:scaleX(0.9965);-webkit-text-stroke:0.3px #74f3c2;">jharwinbarrozo</span><svg class="b" style="left:2600px;top:582px" width="200" height="34" viewBox="0 0 200 34">
<path d="M5 28 L13 19 L19 24 L33 9" fill="none" stroke="#9e9e9e" stroke-width="3"/>
<path d="M153 5 L156.3 13 L165 13.4 L158.3 19 L160.6 27.5 L153 22.8 L145.4 27.5 L147.7 19 L141 13.4 L149.7 13 Z" fill="none" stroke="#9e9e9e" stroke-width="2.4"/>
</svg><span class="t" style="left:2643.0px;top:585.3px;font-size:24px;color:#a3a3a3;transform:scaleX(0.9929);-webkit-text-stroke:0.3px #a3a3a3;">110.8k</span><span class="t" style="left:2775.0px;top:585.3px;font-size:24px;color:#a3a3a3;transform:scaleX(0.9200);-webkit-text-stroke:0.3px #a3a3a3;">11</span><div class="b" style="left:2422px;top:635px;width:526px;height:2px;background:#1c1c1c;"></div><svg class="b" style="left:0;top:0" width="2948" height="1566" viewBox="0 0 2948 1566"><path d="M2472.8 748.5 L2472.8 756 L2528 799.8 L2528.9 782.7 Z" fill="#262626"/><path d="M2528.9 782.7 L2571.7 755 L2571.7 766.5 L2528 799.8 Z" fill="#3a3a3a"/><path d="M2516.5 724.7 L2571.7 755 L2528.9 782.7 L2472.8 748.5 Z" fill="#2a2a2a" stroke="#333" stroke-width="0.8"/><path d="M2572.6 757 L2578.8 762.3 L2572.6 766.5 Z" fill="#c8ccd0"/><path d="M2470.5 760.0 L2477.5 758.5 L2477.0 772.0 L2470.0 780.5 L2463.0 776.0 L2469.5 771.5 Z" fill="#c9cdd2"/><path d="M2484.6 768.5 L2491.6 767.0 L2491.1 780.5 L2484.1 789.0 L2477.1 784.5 L2483.6 780.0 Z" fill="#c9cdd2"/><path d="M2498.7 777.0 L2505.7 775.5 L2505.2 789.0 L2498.2 797.5 L2491.2 793.0 L2497.7 788.5 Z" fill="#c9cdd2"/><path d="M2512.8 785.5 L2519.8 784.0 L2519.3 797.5 L2512.3 806.0 L2505.3 801.5 L2511.8 797.0 Z" fill="#c9cdd2"/></svg><span class="t" style="left:2602.3px;top:664.3px;font-size:28px;color:#f2f2f2;transform:scaleX(0.9914);-webkit-text-stroke:0.3px #f2f2f2;">STM32G031J6M6</span><span class="t" style="left:2602.3px;top:713.7px;font-size:24px;color:#a3a3a3;transform:scaleX(0.9816);-webkit-text-stroke:0.3px #a3a3a3;">ARM® Cortex®-M0+ STM32G0</span><span class="t" style="left:2602.3px;top:744.7px;font-size:24px;color:#a3a3a3;transform:scaleX(0.9816);-webkit-text-stroke:0.3px #a3a3a3;">Microcontroller IC 32-Bit Singl...</span><span class="t" style="left:2602.3px;top:788.3px;font-size:24px;color:#74f3c2;transform:scaleX(0.9807);-webkit-text-stroke:0.3px #74f3c2;">adrian95</span><div class="b" style="left:2422px;top:840px;width:536px;height:57px;background:#3f3f3f;border-top-left-radius:14px;"></div><div class="b" style="left:2422px;top:896px;width:526px;height:2px;background:#242424;"></div><svg class="b" style="left:2452px;top:850px" width="36" height="34" viewBox="0 0 36 34">
<path d="M18 5 L32 18 L28 18 L28 29 L21 29 L21 21 L15 21 L15 29 L8 29 L8 18 L4 18 Z" fill="#9e9e9e"/>
</svg><span class="t" style="left:2502.8px;top:855.3px;font-size:28px;color:#f2f2f2;transform:scaleX(0.9337);font-weight:700;">Project</span><svg class="b" style="left:2912px;top:858px" width="28" height="22" viewBox="0 0 28 22">
<path d="M6 7 L14 15 L22 7" fill="none" stroke="#9e9e9e" stroke-width="2.6"/>
</svg><span class="t" style="left:2455.5px;top:924.5px;font-size:28px;color:#9c9c9c;transform:scaleX(0.9826);-webkit-text-stroke:0.3px #9c9c9c;">Project Name</span><div class="b" style="left:2454px;top:962px;width:312px;height:199px;background:#202020;border-radius:9px;"></div><span class="t" style="left:2471.0px;top:967.8px;font-size:28px;color:#f2f2f2;transform:scaleX(0.9503);-webkit-text-stroke:0.3px #f2f2f2;">PICO Smart</span><span class="t" style="left:2471.0px;top:1007.0px;font-size:28px;color:#f2f2f2;transform:scaleX(1.0065);-webkit-text-stroke:0.3px #f2f2f2;">Automation Controller</span><span class="t" style="left:2471.0px;top:1047.0px;font-size:28px;color:#f2f2f2;transform:scaleX(0.9534);-webkit-text-stroke:0.3px #f2f2f2;">NextPCB 1-4 Layer</span><span class="t" style="left:2471.0px;top:1087.6px;font-size:28px;color:#f2f2f2;transform:scaleX(0.9905);-webkit-text-stroke:0.3px #f2f2f2;">Standard Constraints</span><span class="t" style="left:2471.0px;top:1126.8px;font-size:28px;color:#f2f2f2;transform:scaleX(0.9579);-webkit-text-stroke:0.3px #f2f2f2;">8Udc</span><svg class="b" style="left:0;top:0" width="2948" height="1566" viewBox="0 0 2948 1566">
<rect x="2802.6" y="937.2" width="115.6" height="89.2" fill="#3f8c58"/>
<path d="M2803 1003 L2843 1003 L2843 1015 L2803 1015 Z" fill="#1f4a2c" opacity="0.8"/>
<rect x="2888.4" y="928.4" width="26.4" height="29.4" rx="1" fill="#aaa4d2"/>
<rect x="2891" y="937.5" width="23" height="18.5" fill="#8a8078"/>
<rect x="2891" y="937.5" width="23" height="7" fill="#cfc6bd"/>
<rect x="2803.4" y="941.9" width="9.6" height="29.4" fill="#2c2c2c"/>
<rect x="2852.2" y="934.7" width="10.9" height="9.7" fill="#9a9a9a"/>
<rect x="2853.9" y="958.3" width="10.1" height="10.1" fill="#3a3a3a"/>
<rect x="2826" y="940" width="7" height="5" fill="#333"/>
<rect x="2873" y="948" width="5" height="5" fill="#333"/>
<rect x="2800" y="975.5" width="10.6" height="24.4" fill="#5fa85e"/>
<circle cx="2804.5" cy="980" r="2.6" fill="#555"/><circle cx="2804.5" cy="988" r="2.6" fill="#555"/><circle cx="2804.5" cy="996" r="2.6" fill="#555"/>
<rect x="2813" y="977.6" width="33.3" height="25.2" fill="#7b7ecf"/>
<rect x="2851" y="985.6" width="12.1" height="6.7" fill="#3a3a3a"/>
<g fill="#333"><rect x="2869" y="993.2" width="7" height="10.1"/><rect x="2882" y="993.2" width="7" height="10.1"/><rect x="2894.5" y="993.2" width="7" height="10.1"/><rect x="2907" y="993.2" width="7" height="10.1"/></g>
<rect x="2910.2" y="967.1" width="5.1" height="10.9" fill="#333"/>
<rect x="2869" y="1012.1" width="24.8" height="16.8" fill="#63a962"/>
<rect x="2893.4" y="1012.1" width="26.5" height="16.8" fill="#63a962"/>
<g fill="#555"><circle cx="2874" cy="1024" r="2.6"/><circle cx="2882" cy="1024" r="2.6"/><circle cx="2890" cy="1024" r="2.6"/><circle cx="2899" cy="1024" r="2.6"/><circle cx="2907" cy="1024" r="2.6"/><circle cx="2915" cy="1024" r="2.6"/></g>
<rect x="2850.5" y="1012.5" width="11.5" height="11" rx="2" fill="none" stroke="#b6d6bc" stroke-width="1.3"/>
</svg><span class="t" style="left:2455.0px;top:1176.3px;font-size:28px;color:#9c9c9c;transform:scaleX(0.9979);-webkit-text-stroke:0.3px #9c9c9c;">Description</span><div class="b" style="left:2454px;top:1214px;width:472px;height:352px;background:#202020;border-top-left-radius:9px;border-top-right-radius:9px;"></div><span class="t" style="left:2470.5px;top:1227.3px;font-size:28px;color:#f2f2f2;transform:scaleX(0.9994);-webkit-text-stroke:0.3px #f2f2f2;">Use this template if you plan to get</span><span class="t" style="left:2470.5px;top:1267.8px;font-size:28px;color:#f2f2f2;transform:scaleX(0.9773);-webkit-text-stroke:0.3px #f2f2f2;">your 1-4 layer boards</span><span class="t" style="left:2470.5px;top:1307.3px;font-size:28px;color:#f2f2f2;transform:scaleX(0.9875);-webkit-text-stroke:0.3px #f2f2f2;">manufactured with HQ NextPCB</span><span class="t" style="left:2470.5px;top:1348.3px;font-size:28px;color:#f2f2f2;transform:scaleX(1.0103);-webkit-text-stroke:0.3px #f2f2f2;">(nextpcb.com). This template is</span><span class="t" style="left:2470.5px;top:1387.7px;font-size:28px;color:#f2f2f2;transform:scaleX(0.9994);-webkit-text-stroke:0.3px #f2f2f2;">designed for generic designs to</span><span class="t" style="left:2470.5px;top:1427.3px;font-size:28px;color:#f2f2f2;transform:scaleX(1.0031);-webkit-text-stroke:0.3px #f2f2f2;">minimize unnecessary costs and</span><span class="t" style="left:2470.5px;top:1466.7px;font-size:28px;color:#f2f2f2;transform:scaleX(1.0094);-webkit-text-stroke:0.3px #f2f2f2;">complications where possible.</span><span class="t" style="left:2470.5px;top:1538.6px;font-size:28px;color:#f2f2f2;transform:scaleX(0.9543);font-weight:700;">https://www.nextpcb.com/pcb-</span></body></html>
